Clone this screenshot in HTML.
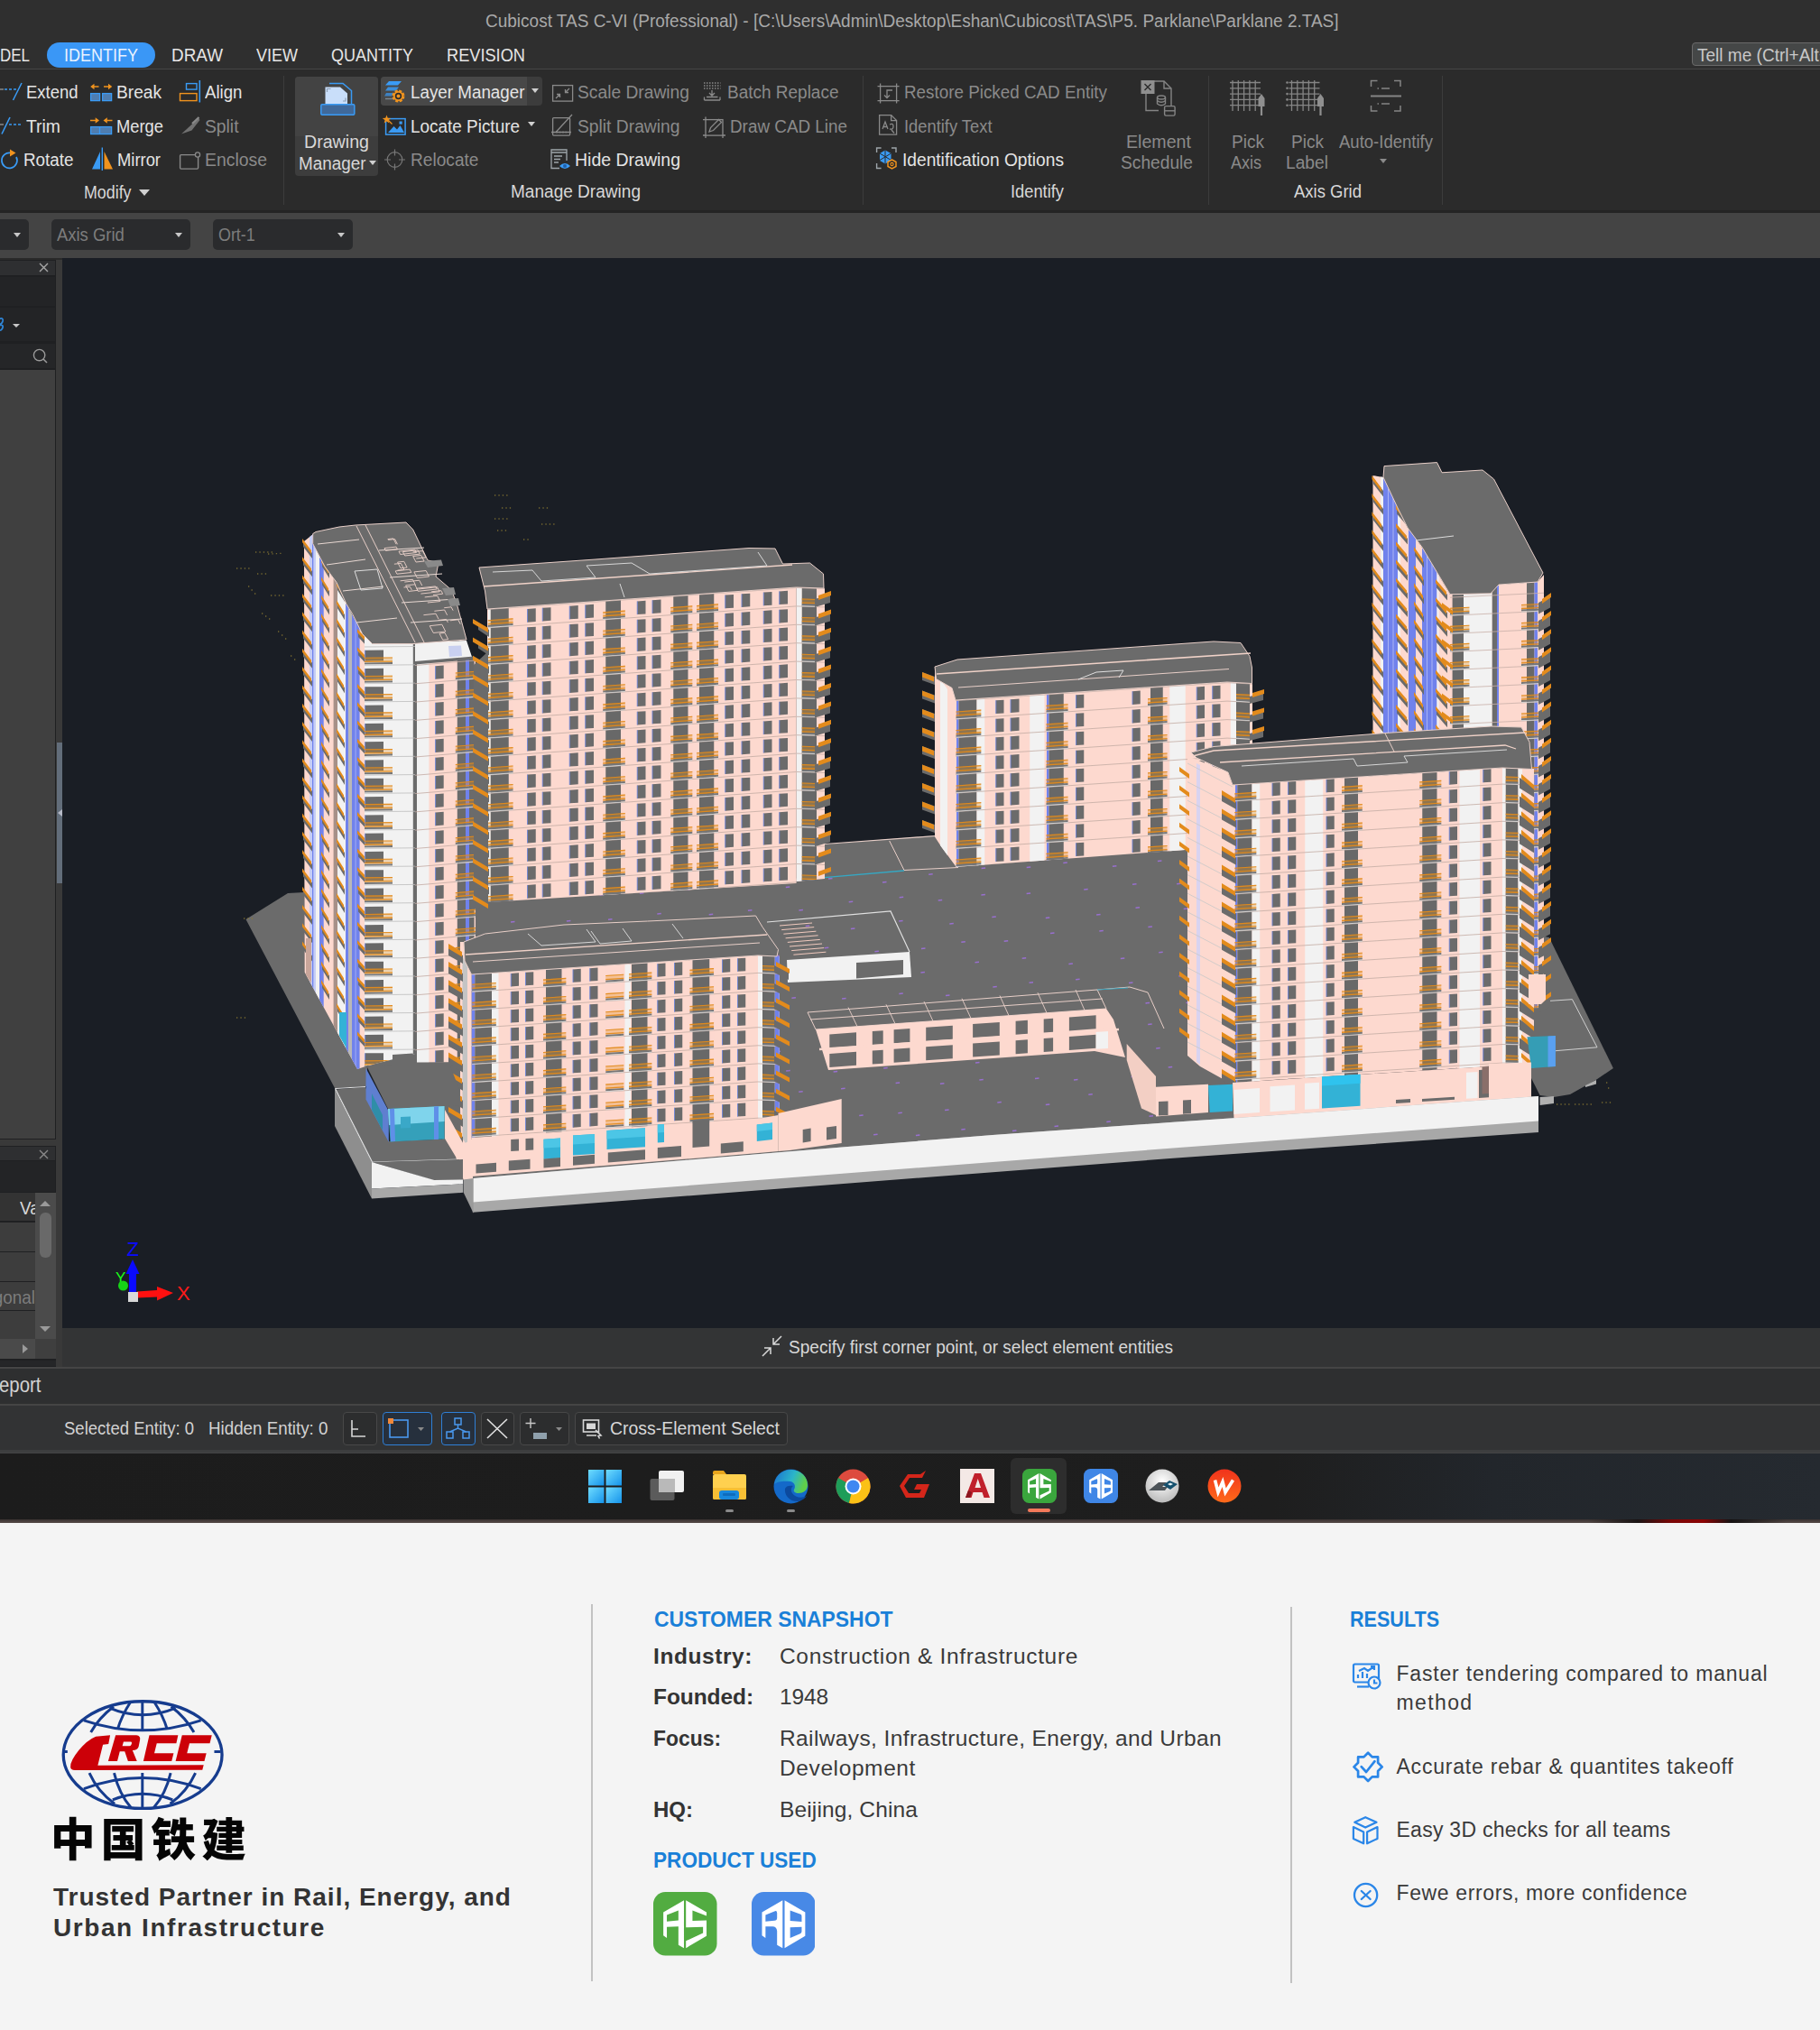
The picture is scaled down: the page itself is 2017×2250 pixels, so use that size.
<!DOCTYPE html>
<html><head><meta charset="utf-8"><title>Cubicost TAS</title>
<style>
html,body{margin:0;padding:0;background:#f4f4f4;}
body{width:2017px;height:2250px;position:relative;overflow:hidden;font-family:"Liberation Sans","Noto Sans CJK SC",sans-serif;}
div{box-sizing:content-box}
</style></head><body>
<div style="position:absolute;left:0px;top:286px;width:2017px;height:1186px;background:#1a1e25;"></div>
<div style="position:absolute;left:0px;top:286px;width:69px;height:1230px;background:#393939;"></div>
<div style="position:absolute;left:0px;top:286px;width:69px;height:2px;background:#2a2a2a;"></div>
<div style="position:absolute;left:0px;top:288px;width:62px;height:975px;background:#1f2022;"></div>
<div style="position:absolute;left:0px;top:289px;width:61px;height:15.5px;background:#2e2f31;"></div>
<svg style="position:absolute;left:43px;top:291px" width="11" height="11" viewBox="0 0 11 11"><path d="M1 1L10 10M10 1L1 10" stroke="#a8a8a8" stroke-width="1.4" fill="none"/></svg>
<div style="position:absolute;left:0px;top:306.5px;width:61px;height:32px;background:#232426;"></div>
<div style="position:absolute;left:0px;top:341px;width:61px;height:36.5px;background:#232426;"></div>
<svg style="position:absolute;left:0;top:350px" width="8" height="22" viewBox="0 0 8 22"><path d="M-2 4q6 -3 5 2q-1 4 -5 3M-2 11q6 -2 5 2q-1 4 -5 3" stroke="#2f86d8" stroke-width="1.8" fill="none"/></svg>
<div style="position:absolute;left:14px;top:358.8px;border:4px solid transparent;border-top:4.4px solid #c8c8c8;border-bottom:0"></div>
<div style="position:absolute;left:0px;top:380.5px;width:61px;height:27.5px;background:#252628;"></div>
<svg style="position:absolute;left:35px;top:385px" width="20" height="20" viewBox="0 0 20 20"><circle cx="8.6" cy="8.6" r="6.2" stroke="#9a9a9a" stroke-width="1.4" fill="none"/><path d="M13 13l4 4" stroke="#9a9a9a" stroke-width="1.6"/></svg>
<div style="position:absolute;left:0px;top:410px;width:61px;height:852px;background:#404040;"></div>
<div style="position:absolute;left:62.8px;top:823px;width:6.3px;height:156px;background:#626d7a;"></div>
<div style="position:absolute;left:64px;top:896.5px;border:4.5px solid transparent;border-right:5px solid #b5b9c6;border-left:0"></div>
<div style="position:absolute;left:0px;top:1270px;width:62px;height:246px;background:#1f2022;"></div>
<div style="position:absolute;left:0px;top:1271px;width:61px;height:15px;background:#2e2f31;"></div>
<svg style="position:absolute;left:43px;top:1273.5px" width="11" height="11" viewBox="0 0 11 11"><path d="M1 1L10 10M10 1L1 10" stroke="#8a8a8a" stroke-width="1.4" fill="none"/></svg>
<div style="position:absolute;left:0px;top:1287px;width:61px;height:34px;background:#232426;"></div>
<div style="position:absolute;left:0px;top:1322px;width:39px;height:31px;background:#333333;"></div>
<div style="position:absolute;left:21.5px;top:1327.5px;width:17.5px;height:24px;overflow:hidden"><div style="font-size:21px;line-height:21px;color:#d8d8d8;white-space:nowrap;transform:scaleX(0.9);transform-origin:0 0">Value</div></div>
<div style="position:absolute;left:0px;top:1354.5px;width:39px;height:32px;background:#3d3d3d;"></div>
<div style="position:absolute;left:0px;top:1387.5px;width:39px;height:32px;background:#3d3d3d;"></div>
<div style="position:absolute;left:0px;top:1420.5px;width:39px;height:31.5px;background:#3d3d3d;"></div>
<div style="position:absolute;left:0px;top:1453px;width:39px;height:31px;background:#3d3d3d;"></div>
<div style="position:absolute;left:0;top:1426.5px;width:38.5px;height:26px;overflow:hidden"><div style="position:absolute;right:0;top:0;font-size:21px;line-height:21px;color:#7c7c7c;white-space:nowrap;transform:scaleX(0.9);transform-origin:100% 0">Orthogonal</div></div>
<div style="position:absolute;left:39px;top:1322px;width:23px;height:162px;background:#4b4b4b;"></div>
<div style="position:absolute;left:44px;top:1344px;width:12.5px;height:50px;background:#696969;border-radius:6px;"></div>
<div style="position:absolute;left:44.1px;top:1330.59px;border:6.2px solid transparent;border-bottom:6.82px solid #9a9a9a;border-top:0"></div>
<div style="position:absolute;left:44.1px;top:1470.09px;border:6.2px solid transparent;border-top:6.82px solid #9a9a9a;border-bottom:0"></div>
<div style="position:absolute;left:0px;top:1484px;width:39px;height:22px;background:#4a4a4a;"></div>
<div style="position:absolute;left:39px;top:1484px;width:23px;height:22px;background:#3f3f3f;"></div>
<div style="position:absolute;left:25.475px;top:1489.5px;border:5.5px solid transparent;border-left:6.05px solid #9a9a9a;border-right:0"></div>
<div style="position:absolute;left:0px;top:1508px;width:62px;height:6px;background:#252628;"></div>
<svg style="position:absolute;left:0;top:0" width="2017" height="1480" viewBox="0 0 2017 1480" shape-rendering="auto">
<polygon points="272.5,1019 319,990 337.5,989 337.5,1077.5 407,1183 407,1204 371,1206" fill="#6b6b6b" />
<polygon points="1697,1035 1716.8,1039 1787.9,1184 1769,1196.7 1740,1213 1722,1216 1706.6,1214 1697,1195" fill="#6b6b6b" />
<polygon points="1706.6,1216 1722,1215 1722,1223 1706.6,1225" fill="#b0b0b0" />
<polygon points="1757,1203 1769,1197 1769,1201.5 1757,1205" fill="#b0b0b0" />
<polyline points="1713.6,1109.6 1742.4,1107.7 1770,1160.8 1723.9,1164.7" fill="none" stroke="#d0d0d0" stroke-width="1" />
<clipPath id="podclip"><polygon points="400,1000 912,972 912,936 1036,926 1320,940 1400,1237 523.8,1306 490,1262 406,1181"/></clipPath>
<polygon points="400,1000 912,972 912,936 1036,926 1320,940 1400,1237 523.8,1306 490,1262 406,1181" fill="#6b6b6b" />
<path d="M557.2 996.5l4.500 -0.500M614.4 992.4l4.500 -0.500M664.6 992.1l4.500 -0.500M708.9 990.2l4.500 -0.500M760.6 986.1l4.500 -0.500M813.1 979.4l4.500 -0.500M870.8 983.5l4.500 -0.500M918 974.1l4.500 -0.500M978 978.1l4.500 -0.500M1029.2 969.3l4.500 -0.500M1087.6 962.5l4.500 -0.500M1137.7 961.6l4.500 -0.500M1178.3 956.6l4.500 -0.500M1232.9 960.3l4.500 -0.500M1282.9 954.6l4.500 -0.500M1342.2 949.2l4.500 -0.500M1392.8 942.8l4.500 -0.500M566 1022.1l4.500 -0.500M627.9 1021l4.500 -0.500M674 1019.3l4.500 -0.500M728.3 1013.1l4.500 -0.500M785.7 1013.8l4.500 -0.500M828.9 1009.2l4.500 -0.500M885.4 1009l4.500 -0.500M940.7 999.8l4.500 -0.500M996.7 994.8l4.500 -0.500M1039.7 997.9l4.500 -0.500M1087.4 991.9l4.500 -0.500M1137.6 990.4l4.500 -0.500M1201.2 986.1l4.500 -0.500M1255 980.2l4.500 -0.500M1304.1 979.7l4.500 -0.500M1354.3 975.1l4.500 -0.500M1410.4 976.6l4.500 -0.500M585.6 1051.6l4.500 -0.500M631 1048.7l4.500 -0.500M692.4 1048.3l4.500 -0.500M747.2 1037.9l4.500 -0.500M792.2 1038.5l4.500 -0.500M838.4 1033.1l4.500 -0.500M892.7 1026.4l4.500 -0.500M942.9 1029.6l4.500 -0.500M996.1 1021.1l4.500 -0.500M1052.3 1024l4.500 -0.500M1099.3 1016.5l4.500 -0.500M1158.8 1017.5l4.500 -0.500M1215.1 1014l4.500 -0.500M1258.5 1006.3l4.500 -0.500M1311.7 1007.6l4.500 -0.500M1373.3 997l4.500 -0.500M1412.8 994.5l4.500 -0.500M594.7 1074.8l4.500 -0.500M652.4 1069.3l4.500 -0.500M695.1 1067.6l4.500 -0.500M752.9 1065.8l4.500 -0.500M814.2 1063.7l4.500 -0.500M859.2 1059.7l4.500 -0.500M913.8 1050.7l4.500 -0.500M969.4 1054.7l4.500 -0.500M1021 1051.6l4.500 -0.500M1065.3 1044.3l4.500 -0.500M1112.7 1043.3l4.500 -0.500M1164 1034.4l4.500 -0.500M1218.3 1032l4.500 -0.500M1272.4 1027.6l4.500 -0.500M1319 1025.3l4.500 -0.500M1372.6 1024.1l4.500 -0.500M1423.4 1025.9l4.500 -0.500M613.8 1096.5l4.500 -0.500M660 1095.2l4.500 -0.500M713.8 1089.6l4.500 -0.500M773.6 1095l4.500 -0.500M819.5 1086.6l4.500 -0.500M865.4 1079.5l4.500 -0.500M921.5 1077.8l4.500 -0.500M981.3 1073.5l4.500 -0.500M1020.4 1078.1l4.500 -0.500M1080.5 1066.8l4.500 -0.500M1132.7 1062.3l4.500 -0.500M1184.4 1068.5l4.500 -0.500M1241.8 1062.4l4.500 -0.500M1284.2 1055.8l4.500 -0.500M1334.7 1056.5l4.500 -0.500M1392.5 1053.3l4.500 -0.500M1441.3 1044.4l4.500 -0.500M630 1129.8l4.500 -0.500M682.6 1124.8l4.500 -0.500M734.1 1120.8l4.500 -0.500M776.6 1115.3l4.500 -0.500M830.7 1107.1l4.500 -0.500M877.4 1106.3l4.500 -0.500M933.1 1107.1l4.500 -0.500M996.3 1101.4l4.500 -0.500M1048 1103.5l4.500 -0.500M1100.3 1093.9l4.500 -0.500M1140.5 1089.3l4.500 -0.500M1192.1 1085.7l4.500 -0.500M1251 1089.4l4.500 -0.500M1306.4 1081.9l4.500 -0.500M1355.4 1081.8l4.500 -0.500M1398.4 1077.1l4.500 -0.500M1463.6 1075l4.500 -0.500M642 1149.8l4.500 -0.500M684.9 1149.6l4.500 -0.500M739.3 1146.4l4.500 -0.500M801.5 1139.1l4.500 -0.500M844.4 1141.3l4.500 -0.500M901.6 1130.2l4.500 -0.500M944 1126.7l4.500 -0.500M1008.5 1130l4.500 -0.500M1048.3 1126.9l4.500 -0.500M1113.7 1121.9l4.500 -0.500M1155.6 1117.5l4.500 -0.500M1204.1 1108.8l4.500 -0.500M1269.5 1111.9l4.500 -0.500M1314.4 1111.4l4.500 -0.500M1364.9 1107.5l4.500 -0.500M1423.2 1097.6l4.500 -0.500M1466 1095.1l4.500 -0.500M646.8 1175.9l4.500 -0.500M699.1 1170.9l4.500 -0.500M749.1 1172.5l4.500 -0.500M804.7 1164.7l4.500 -0.500M860.3 1165.8l4.500 -0.500M909.7 1162.7l4.500 -0.500M963 1155.5l4.500 -0.500M1015.4 1147.1l4.500 -0.500M1066 1145.4l4.500 -0.500M1111.1 1148.3l4.500 -0.500M1165.8 1141.7l4.500 -0.500M1226.6 1139.3l4.500 -0.500M1272.2 1135.6l4.500 -0.500M1327.9 1134.9l4.500 -0.500M1372.7 1129.4l4.500 -0.500M1427 1123.3l4.500 -0.500M1487.4 1122.3l4.500 -0.500M665 1202.6l4.500 -0.500M722.6 1196.1l4.500 -0.500M769.8 1193.5l4.500 -0.500M820.2 1192l4.500 -0.500M871.2 1187.1l4.500 -0.500M923.6 1187.9l4.500 -0.500M979.2 1184l4.500 -0.500M1035.1 1174.5l4.500 -0.500M1081 1178l4.500 -0.500M1137.4 1166.7l4.500 -0.500M1177.9 1166.4l4.500 -0.500M1229.2 1161.1l4.500 -0.500M1281.2 1162.1l4.500 -0.500M1344.5 1161.1l4.500 -0.500M1386.5 1156l4.500 -0.500M1446.6 1146.9l4.500 -0.500M1502.1 1151.9l4.500 -0.500M672.5 1229.5l4.500 -0.500M727.4 1221.6l4.500 -0.500M788.8 1221.7l4.500 -0.500M827.6 1214.4l4.500 -0.500M885.2 1210.2l4.500 -0.500M932.1 1206.7l4.500 -0.500M992.6 1200.4l4.500 -0.500M1041.9 1201.3l4.500 -0.500M1085.3 1196.9l4.500 -0.500M1147 1195.4l4.500 -0.500M1190 1196.9l4.500 -0.500M1253.6 1193.4l4.500 -0.500M1294.7 1183.1l4.500 -0.500M1345.6 1184.9l4.500 -0.500M1401.3 1175.1l4.500 -0.500M1455.8 1179.6l4.500 -0.500M1514.1 1169.8l4.500 -0.500M684.4 1254.2l4.500 -0.500M743.1 1248.7l4.500 -0.500M787.4 1239l4.500 -0.500M849 1239.4l4.500 -0.500M891.2 1241.2l4.500 -0.500M952.2 1236.5l4.500 -0.500M995.3 1233.8l4.500 -0.500M1047.1 1230.5l4.500 -0.500M1105.3 1222l4.500 -0.500M1158.8 1224.6l4.500 -0.500M1206.3 1213.3l4.500 -0.500M1262.4 1211.1l4.500 -0.500M1307.8 1207l4.500 -0.500M1358.8 1204.1l4.500 -0.500M1415 1201.9l4.500 -0.500M1474.2 1198.4l4.500 -0.500M1522 1194l4.500 -0.500M700.6 1270.2l4.500 -0.500M751 1266.9l4.500 -0.500M810.7 1268.9l4.500 -0.500M854 1264.8l4.500 -0.500M918 1257.9l4.500 -0.500M968.1 1257.8l4.500 -0.500M1014.9 1258.5l4.500 -0.500M1065.3 1252l4.500 -0.500M1122 1253.4l4.500 -0.500M1168.5 1248.6l4.500 -0.500M1226.3 1243.4l4.500 -0.500M1273.5 1237.2l4.500 -0.500M1319.9 1231.7l4.500 -0.500M1372.1 1234.5l4.500 -0.500M1427.1 1225.4l4.500 -0.500M1476.4 1228.9l4.500 -0.500M1540.9 1223.9l4.500 -0.500M712.5 1297.4l4.500 -0.500M764.7 1296.3l4.500 -0.500M814.5 1292.9l4.500 -0.500M868.2 1294.7l4.500 -0.500M931.6 1287.3l4.500 -0.500M971.9 1288.2l4.500 -0.500M1025 1278.8l4.500 -0.500M1072 1275.7l4.500 -0.500M1131.6 1273.6l4.500 -0.500M1179.2 1270.3l4.500 -0.500M1228.1 1264.6l4.500 -0.500M1281.4 1262.7l4.500 -0.500M1332.7 1255.6l4.500 -0.500M1388.9 1254.4l4.500 -0.500M1445.4 1254.1l4.500 -0.500M1500 1252.1l4.500 -0.500M1551.5 1251l4.500 -0.500" stroke="#a070e0" stroke-width="1.500" fill="none" opacity="0.850" clip-path="url(#podclip)"/>
<polyline points="905,973.4 1002,965" fill="none" stroke="#35a8c4" stroke-width="1.3" />
<polyline points="985.7,932 1002,964.5 1062,961.5" fill="none" stroke="#e8cfc8" stroke-width="1" />
<polyline points="914,935.5 1037,926.5" fill="none" stroke="#e8cfc8" stroke-width="1.2" />
<clipPath id="c1"><polygon points="1521.5,527 1533,529 1549,563 1560,585 1576,606.5 1607,658.7 1607,830 1521.5,830"/></clipPath>
<g clip-path="url(#c1)">
<rect x="1520" y="520" width="90" height="320" fill="#fdd9cf"/>
<rect x="1530" y="520" width="3" height="320" fill="#f2f2f2"/>
<rect x="1533" y="520" width="16" height="320" fill="#7082ec"/>
<rect x="1549" y="520" width="3" height="320" fill="#f2f2f2"/>
<rect x="1561" y="520" width="8" height="320" fill="#7082ec"/>
<rect x="1576" y="520" width="16.5" height="320" fill="#7082ec"/>
<rect x="1592.5" y="520" width="2" height="320" fill="#f2f2f2"/>
<rect x="1538" y="520" width="1" height="320" fill="#a9b3f4"/>
<rect x="1543.5" y="520" width="1" height="320" fill="#a9b3f4"/>
<rect x="1581" y="520" width="1" height="320" fill="#a9b3f4"/>
<rect x="1586.5" y="520" width="1" height="320" fill="#a9b3f4"/>
</g>
<path d="M1522 530L1533 544V550.5L1522 536.5zM1522 550.1L1533 564.1V570.6L1522 556.6zM1522 570.2L1533 584.2V590.7L1522 576.7zM1522 590.3L1533 604.3V610.8L1522 596.8zM1522 610.4L1533 624.4V630.9L1522 616.9zM1522 630.5L1533 644.5V651L1522 637zM1522 650.6L1533 664.6V671.1L1522 657.1zM1522 670.7L1533 684.7V691.2L1522 677.2zM1522 690.8L1533 704.8V711.3L1522 697.3zM1522 710.9L1533 724.9V731.4L1522 717.4zM1522 731L1533 745V751.5L1522 737.5zM1522 751.1L1533 765.1V771.6L1522 757.6zM1522 771.2L1533 785.2V791.7L1522 777.7zM1522 791.3L1533 805.3V811.8L1522 797.8zM1522 811.4L1533 825.4V831.9L1522 817.9zM1548 563L1560 577V583.5L1548 569.5zM1548 583.1L1560 597.1V603.6L1548 589.6zM1548 603.2L1560 617.2V623.7L1548 609.7zM1548 623.3L1560 637.3V643.8L1548 629.8zM1548 643.4L1560 657.4V663.9L1548 649.9zM1548 663.5L1560 677.5V684L1548 670zM1548 683.6L1560 697.6V704.1L1548 690.1zM1548 703.7L1560 717.7V724.2L1548 710.2zM1548 723.8L1560 737.8V744.3L1548 730.3zM1548 743.9L1560 757.9V764.4L1548 750.4zM1548 764L1560 778V784.5L1548 770.5zM1548 784.1L1560 798.1V804.6L1548 790.6zM1548 804.2L1560 818.2V824.7L1548 810.7zM1568 589L1578 603V609.5L1568 595.5zM1568 609.1L1578 623.1V629.6L1568 615.6zM1568 629.2L1578 643.2V649.7L1568 635.7zM1568 649.3L1578 663.3V669.8L1568 655.8zM1568 669.4L1578 683.4V689.9L1568 675.9zM1568 689.5L1578 703.5V710L1568 696zM1568 709.6L1578 723.6V730.1L1568 716.1zM1568 729.7L1578 743.7V750.2L1568 736.2zM1568 749.8L1578 763.8V770.3L1568 756.3zM1568 769.9L1578 783.9V790.4L1568 776.4zM1568 790L1578 804V810.5L1568 796.5zM1568 810.1L1578 824.1V830.6L1568 816.6zM1592 625L1604 639V645.5L1592 631.5zM1592 645.1L1604 659.1V665.6L1592 651.6zM1592 665.2L1604 679.2V685.7L1592 671.7zM1592 685.3L1604 699.3V705.8L1592 691.8zM1592 705.4L1604 719.4V725.9L1592 711.9zM1592 725.5L1604 739.5V746L1592 732zM1592 745.6L1604 759.6V766.1L1592 752.1zM1592 765.7L1604 779.7V786.2L1592 772.2zM1592 785.8L1604 799.8V806.3L1592 792.3zM1592 805.9L1604 819.9V826.4L1592 812.4z" fill="#6b6b6b"/>
<path d="M1520.5 527L1531 541V545.2L1520.5 531.2zM1520.5 547.1L1531 561.1V565.3L1520.5 551.3zM1520.5 567.2L1531 581.2V585.4L1520.5 571.4zM1520.5 587.3L1531 601.3V605.5L1520.5 591.5zM1520.5 607.4L1531 621.4V625.6L1520.5 611.6zM1520.5 627.5L1531 641.5V645.7L1520.5 631.7zM1520.5 647.6L1531 661.6V665.8L1520.5 651.8zM1520.5 667.7L1531 681.7V685.9L1520.5 671.9zM1520.5 687.8L1531 701.8V706L1520.5 692zM1520.5 707.9L1531 721.9V726.1L1520.5 712.1zM1520.5 728L1531 742V746.2L1520.5 732.2zM1520.5 748.1L1531 762.1V766.3L1520.5 752.3zM1520.5 768.2L1531 782.2V786.4L1520.5 772.4zM1520.5 788.3L1531 802.3V806.5L1520.5 792.5zM1520.5 808.4L1531 822.4V826.6L1520.5 812.6zM1547 560L1559 574V578.2L1547 564.2zM1547 580.1L1559 594.1V598.3L1547 584.3zM1547 600.2L1559 614.2V618.4L1547 604.4zM1547 620.3L1559 634.3V638.5L1547 624.5zM1547 640.4L1559 654.4V658.6L1547 644.6zM1547 660.5L1559 674.5V678.7L1547 664.7zM1547 680.6L1559 694.6V698.8L1547 684.8zM1547 700.7L1559 714.7V718.9L1547 704.9zM1547 720.8L1559 734.8V739L1547 725zM1547 740.9L1559 754.9V759.1L1547 745.1zM1547 761L1559 775V779.2L1547 765.2zM1547 781.1L1559 795.1V799.3L1547 785.3zM1547 801.2L1559 815.2V819.4L1547 805.4zM1567 586L1577 600V604.2L1567 590.2zM1567 606.1L1577 620.1V624.3L1567 610.3zM1567 626.2L1577 640.2V644.4L1567 630.4zM1567 646.3L1577 660.3V664.5L1567 650.5zM1567 666.4L1577 680.4V684.6L1567 670.6zM1567 686.5L1577 700.5V704.7L1567 690.7zM1567 706.6L1577 720.6V724.8L1567 710.8zM1567 726.7L1577 740.7V744.9L1567 730.9zM1567 746.8L1577 760.8V765L1567 751zM1567 766.9L1577 780.9V785.1L1567 771.1zM1567 787L1577 801V805.2L1567 791.2zM1567 807.1L1577 821.1V825.3L1567 811.3zM1591 622L1603 636V640.2L1591 626.2zM1591 642.1L1603 656.1V660.3L1591 646.3zM1591 662.2L1603 676.2V680.4L1591 666.4zM1591 682.3L1603 696.3V700.5L1591 686.5zM1591 702.4L1603 716.4V720.6L1591 706.6zM1591 722.5L1603 736.5V740.7L1591 726.7zM1591 742.6L1603 756.6V760.8L1591 746.8zM1591 762.7L1603 776.7V780.9L1591 766.9zM1591 782.8L1603 796.8V801L1591 787zM1591 802.9L1603 816.9V821.1L1591 807.1z" fill="#e38b1c"/>
<clipPath id="c2"><polygon points="1607,658.7 1652,657.8 1661,648 1704,645 1711,637 1711,1118 1690,1118 1690,840 1607,840"/></clipPath>
<g clip-path="url(#c2)"><g transform="matrix(1 -0.04808 0 1 1607 659)">
<rect x="-30" y="-40" width="164" height="579" fill="#fdd9cf"/>
<rect x="2.6" y="-40" width="12.4" height="579" fill="#6b6b6b"/>
<rect x="15" y="-40" width="31.7" height="579" fill="#f2f2f2"/>
<rect x="46.7" y="-40" width="5.3" height="579" fill="#6b6b6b"/>
<rect x="52" y="-40" width="2" height="579" fill="#7082ec"/>
<rect x="85" y="-40" width="8.5" height="579" fill="#6b6b6b"/>
<rect x="93.5" y="-40" width="3.5" height="579" fill="#7082ec"/>
<path d="M-30 3.2H134 M-30 23.3H134 M-30 43.4H134 M-30 63.5H134 M-30 83.6H134 M-30 103.7H134 M-30 123.8H134 M-30 143.9H134 M-30 164H134 M-30 184.1H134 M-30 204.2H134 M-30 224.3H134 M-30 244.4H134 M-30 264.5H134 M-30 284.6H134 M-30 304.7H134 M-30 324.8H134 M-30 344.9H134 M-30 365H134 M-30 385.1H134 M-30 405.2H134 M-30 425.3H134 M-30 445.4H134 M-30 465.5H134 M-30 485.6H134 M-30 505.7H134" stroke="#c9b0a8" stroke-width="0.8" fill="none"/>
<line x1="10" y1="14.7" x2="10" y2="539" stroke="#e38b1c" stroke-width="22.8" stroke-dasharray="5.6 14.5" opacity="0.32"/>
<line x1="10" y1="14.7" x2="10" y2="539" stroke="#e38b1c" stroke-width="22.8" stroke-dasharray="1.1 19" opacity="0.95"/>
<line x1="10" y1="18.7" x2="10" y2="539" stroke="#e38b1c" stroke-width="22.8" stroke-dasharray="1.3 18.8" opacity="0.95"/>
<line x1="10" y1="20.4" x2="10" y2="539" stroke="#767676" stroke-width="22.8" stroke-dasharray="2 18.1" opacity="1"/>
<line x1="10" y1="22.5" x2="10" y2="539" stroke="#d2d2d2" stroke-width="22.8" stroke-dasharray="0.9 19.2" opacity="1"/>
<line x1="91.05" y1="14.7" x2="91.05" y2="539" stroke="#e38b1c" stroke-width="24.1" stroke-dasharray="5.6 14.5" opacity="0.32"/>
<line x1="91.05" y1="14.7" x2="91.05" y2="539" stroke="#e38b1c" stroke-width="24.1" stroke-dasharray="1.1 19" opacity="0.95"/>
<line x1="91.05" y1="18.7" x2="91.05" y2="539" stroke="#e38b1c" stroke-width="24.1" stroke-dasharray="1.3 18.8" opacity="0.95"/>
<line x1="91.05" y1="20.4" x2="91.05" y2="539" stroke="#767676" stroke-width="24.1" stroke-dasharray="2 18.1" opacity="1"/>
<line x1="91.05" y1="22.5" x2="91.05" y2="539" stroke="#d2d2d2" stroke-width="24.1" stroke-dasharray="0.9 19.2" opacity="1"/>
</g></g>
<path d="M1705 668L1718 661V673.5L1705 680.5zM1705 688.1L1718 681.1V693.6L1705 700.6zM1705 708.2L1718 701.2V713.7L1705 720.7zM1705 728.3L1718 721.3V733.8L1705 740.8zM1705 748.4L1718 741.4V753.9L1705 760.9zM1705 768.5L1718 761.5V774L1705 781zM1705 788.6L1718 781.6V794.1L1705 801.1zM1705 808.7L1718 801.7V814.2L1705 821.2zM1705 828.8L1718 821.8V834.3L1705 841.3zM1705 848.9L1718 841.9V854.4L1705 861.4zM1705 869L1718 862V874.5L1705 881.5zM1705 889.1L1718 882.1V894.6L1705 901.6zM1705 909.2L1718 902.2V914.7L1705 921.7zM1705 929.3L1718 922.3V934.8L1705 941.8zM1705 949.4L1718 942.4V954.9L1705 961.9zM1705 969.5L1718 962.5V975L1705 982zM1705 989.6L1718 982.6V995.1L1705 1002.1zM1705 1009.7L1718 1002.7V1015.2L1705 1022.2zM1705 1029.8L1718 1022.8V1035.3L1705 1042.3zM1705 1049.9L1718 1042.9V1055.4L1705 1062.4zM1705 1070L1718 1063V1075.5L1705 1082.5zM1705 1090.1L1718 1083.1V1095.6L1705 1102.6zM1705 1110.2L1718 1103.2V1115.7L1705 1122.7z" fill="#6b6b6b"/>
<path d="M1709 664L1719 657V662L1709 669zM1709 684.1L1719 677.1V682.1L1709 689.1zM1709 704.2L1719 697.2V702.2L1709 709.2zM1709 724.3L1719 717.3V722.3L1709 729.3zM1709 744.4L1719 737.4V742.4L1709 749.4zM1709 764.5L1719 757.5V762.5L1709 769.5zM1709 784.6L1719 777.6V782.6L1709 789.6zM1709 804.7L1719 797.7V802.7L1709 809.7zM1709 824.8L1719 817.8V822.8L1709 829.8zM1709 844.9L1719 837.9V842.9L1709 849.9zM1709 865L1719 858V863L1709 870zM1709 885.1L1719 878.1V883.1L1709 890.1zM1709 905.2L1719 898.2V903.2L1709 910.2zM1709 925.3L1719 918.3V923.3L1709 930.3zM1709 945.4L1719 938.4V943.4L1709 950.4zM1709 965.5L1719 958.5V963.5L1709 970.5zM1709 985.6L1719 978.6V983.6L1709 990.6zM1709 1005.7L1719 998.7V1003.7L1709 1010.7zM1709 1025.8L1719 1018.8V1023.8L1709 1030.8zM1709 1045.9L1719 1038.9V1043.9L1709 1050.9zM1709 1066L1719 1059V1064L1709 1071zM1709 1086.1L1719 1079.1V1084.1L1709 1091.1zM1709 1106.2L1719 1099.2V1104.2L1709 1111.2z" fill="#e38b1c"/>
<path d="M1598 668L1610 677V681.5L1598 672.5zM1598 688.1L1610 697.1V701.6L1598 692.6zM1598 708.2L1610 717.2V721.7L1598 712.7zM1598 728.3L1610 737.3V741.8L1598 732.8zM1598 748.4L1610 757.4V761.9L1598 752.9zM1598 768.5L1610 777.5V782L1598 773zM1598 788.6L1610 797.6V802.1L1598 793.1z" fill="#e38b1c"/>
<polygon points="1534,516.6 1592.5,512.6 1598,523.8 1643,521 1655.5,531 1710,635 1704,645 1661,648 1652,657.8 1607,658.7 1576,606.5 1560,585 1549,563 1533,529" fill="#6b6b6b" stroke="#e8cfc8" stroke-width="1"/>
<polyline points="1569,599 1611,594" fill="none" stroke="#dcdcdc" stroke-width="1" />
<polygon points="1036,740 1056,760 1059,776 1059,960 1042.5,937.5 1036,927.5" fill="#fdd9cf" />
<polygon points="1042,752 1050,764 1050,948 1042,937" fill="#f2f2f2" />
<path d="M1022 745L1036 750V759L1022 754zM1022 765.5L1036 770.5V779.5L1022 774.5zM1022 786L1036 791V800L1022 795zM1022 806.5L1036 811.5V820.5L1022 815.5zM1022 827L1036 832V841L1022 836zM1022 847.5L1036 852.5V861.5L1022 856.5zM1022 868L1036 873V882L1022 877zM1022 888.5L1036 893.5V902.5L1022 897.5zM1022 909L1036 914V923L1022 918z" fill="#6b6b6b"/>
<path d="M1022 745L1035 750V755.5L1022 750.5zM1022 765.5L1035 770.5V776L1022 771zM1022 786L1035 791V796.5L1022 791.5zM1022 806.5L1035 811.5V817L1022 812zM1022 827L1035 832V837.5L1022 832.5zM1022 847.5L1035 852.5V858L1022 853zM1022 868L1035 873V878.5L1022 873.5zM1022 888.5L1035 893.5V899L1022 894zM1022 909L1035 914V919.5L1022 914.5z" fill="#e38b1c"/>
<clipPath id="c3"><polygon points="1059,776 1360,756 1360,938.5 1059,961"/></clipPath>
<g clip-path="url(#c3)"><g transform="matrix(1 -0.06645 0 1 1059 776)">
<rect x="-30" y="-40" width="361" height="305" fill="#fdd9cf"/>
<rect x="1" y="-40" width="2.5" height="305" fill="#7082ec"/>
<rect x="3.5" y="-40" width="20" height="305" fill="#6b6b6b"/>
<rect x="23.5" y="-40" width="8.75" height="305" fill="#f2f2f2"/>
<line x1="49.125" y1="3.183" x2="49.125" y2="265" stroke="#6b6b6b" stroke-width="8.75" stroke-dasharray="14.76 5.74"/>
<line x1="44.75" y1="3.183" x2="44.75" y2="265" stroke="#6f86d8" stroke-width="0.9" stroke-dasharray="14.76 5.74"/>
<line x1="65.75" y1="3.183" x2="65.75" y2="265" stroke="#6b6b6b" stroke-width="9.5" stroke-dasharray="14.76 5.74"/>
<line x1="61" y1="3.183" x2="61" y2="265" stroke="#6f86d8" stroke-width="0.9" stroke-dasharray="14.76 5.74"/>
<rect x="82.25" y="-40" width="16.25" height="305" fill="#f2f2f2"/>
<rect x="101" y="-40" width="2.5" height="305" fill="#7082ec"/>
<rect x="103.5" y="-40" width="16.25" height="305" fill="#6b6b6b"/>
<line x1="137.875" y1="3.183" x2="137.875" y2="265" stroke="#6b6b6b" stroke-width="8.75" stroke-dasharray="14.76 5.74"/>
<line x1="133.5" y1="3.183" x2="133.5" y2="265" stroke="#6f86d8" stroke-width="0.9" stroke-dasharray="14.76 5.74"/>
<line x1="200.375" y1="3.183" x2="200.375" y2="265" stroke="#6b6b6b" stroke-width="8.75" stroke-dasharray="14.76 5.74"/>
<line x1="196" y1="3.183" x2="196" y2="265" stroke="#6f86d8" stroke-width="0.9" stroke-dasharray="14.76 5.74"/>
<rect x="216" y="-40" width="13.75" height="305" fill="#6b6b6b"/>
<rect x="237.25" y="-40" width="17.5" height="305" fill="#f2f2f2"/>
<line x1="271.625" y1="3.183" x2="271.625" y2="265" stroke="#6b6b6b" stroke-width="8.75" stroke-dasharray="14.76 5.74"/>
<line x1="267.25" y1="3.183" x2="267.25" y2="265" stroke="#6f86d8" stroke-width="0.9" stroke-dasharray="14.76 5.74"/>
<line x1="289.125" y1="3.183" x2="289.125" y2="265" stroke="#6b6b6b" stroke-width="8.75" stroke-dasharray="14.76 5.74"/>
<line x1="284.75" y1="3.183" x2="284.75" y2="265" stroke="#6f86d8" stroke-width="0.9" stroke-dasharray="14.76 5.74"/>
<path d="M-30 0.6H331 M-30 21.1H331 M-30 41.6H331 M-30 62.1H331 M-30 82.6H331 M-30 103.1H331 M-30 123.6H331 M-30 144.1H331 M-30 164.6H331 M-30 185.1H331 M-30 205.6H331 M-30 226.1H331" stroke="#c4aca4" stroke-width="0.8" fill="none"/>
<line x1="14.4" y1="12.5" x2="14.4" y2="265" stroke="#e38b1c" stroke-width="27.8" stroke-dasharray="5.6 14.9" opacity="0.32"/>
<line x1="14.4" y1="12.5" x2="14.4" y2="265" stroke="#e38b1c" stroke-width="27.8" stroke-dasharray="1.1 19.4" opacity="0.95"/>
<line x1="14.4" y1="16.5" x2="14.4" y2="265" stroke="#e38b1c" stroke-width="27.8" stroke-dasharray="1.3 19.2" opacity="0.95"/>
<line x1="14.4" y1="18.2" x2="14.4" y2="265" stroke="#767676" stroke-width="27.8" stroke-dasharray="2 18.5" opacity="1"/>
<line x1="14.4" y1="20.3" x2="14.4" y2="265" stroke="#d2d2d2" stroke-width="27.8" stroke-dasharray="0.9 19.6" opacity="1"/>
<line x1="112.525" y1="12.5" x2="112.525" y2="265" stroke="#e38b1c" stroke-width="24.05" stroke-dasharray="5.6 14.9" opacity="0.32"/>
<line x1="112.525" y1="12.5" x2="112.525" y2="265" stroke="#e38b1c" stroke-width="24.05" stroke-dasharray="1.1 19.4" opacity="0.95"/>
<line x1="112.525" y1="16.5" x2="112.525" y2="265" stroke="#e38b1c" stroke-width="24.05" stroke-dasharray="1.3 19.2" opacity="0.95"/>
<line x1="112.525" y1="18.2" x2="112.525" y2="265" stroke="#767676" stroke-width="24.05" stroke-dasharray="2 18.5" opacity="1"/>
<line x1="112.525" y1="20.3" x2="112.525" y2="265" stroke="#d2d2d2" stroke-width="24.05" stroke-dasharray="0.9 19.6" opacity="1"/>
<line x1="223.775" y1="12.5" x2="223.775" y2="265" stroke="#e38b1c" stroke-width="21.55" stroke-dasharray="5.6 14.9" opacity="0.32"/>
<line x1="223.775" y1="12.5" x2="223.775" y2="265" stroke="#e38b1c" stroke-width="21.55" stroke-dasharray="1.1 19.4" opacity="0.95"/>
<line x1="223.775" y1="16.5" x2="223.775" y2="265" stroke="#e38b1c" stroke-width="21.55" stroke-dasharray="1.3 19.2" opacity="0.95"/>
<line x1="223.775" y1="18.2" x2="223.775" y2="265" stroke="#767676" stroke-width="21.55" stroke-dasharray="2 18.5" opacity="1"/>
<line x1="223.775" y1="20.3" x2="223.775" y2="265" stroke="#d2d2d2" stroke-width="21.55" stroke-dasharray="0.9 19.6" opacity="1"/>
</g></g>
<clipPath id="c4"><polygon points="1360,756 1388,757.5 1388,846.5 1360,845"/></clipPath>
<g clip-path="url(#c4)"><g transform="matrix(1 0.05357 0 1 1360 756)">
<rect x="-30" y="-40" width="88" height="209" fill="#fdd9cf"/>
<rect x="3.75" y="-40" width="6.25" height="209" fill="#f2f2f2"/>
<rect x="10" y="-40" width="15" height="209" fill="#6b6b6b"/>
<path d="M-30 0.6H58 M-30 21.1H58 M-30 41.6H58 M-30 62.1H58 M-30 82.6H58 M-30 103.1H58 M-30 123.6H58 M-30 144.1H58" stroke="#c4aca4" stroke-width="0.8" fill="none"/>
<line x1="17.5" y1="12.5" x2="17.5" y2="169" stroke="#e38b1c" stroke-width="15" stroke-dasharray="5.6 14.9" opacity="0.32"/>
<line x1="17.5" y1="12.5" x2="17.5" y2="169" stroke="#e38b1c" stroke-width="15" stroke-dasharray="1.1 19.4" opacity="0.95"/>
<line x1="17.5" y1="16.5" x2="17.5" y2="169" stroke="#e38b1c" stroke-width="15" stroke-dasharray="1.3 19.2" opacity="0.95"/>
<line x1="17.5" y1="18.2" x2="17.5" y2="169" stroke="#767676" stroke-width="15" stroke-dasharray="2 18.5" opacity="1"/>
<line x1="17.5" y1="20.3" x2="17.5" y2="169" stroke="#d2d2d2" stroke-width="15" stroke-dasharray="0.9 19.6" opacity="1"/>
</g></g>
<path d="M1385 772L1400 768V776L1385 780zM1385 792.5L1400 788.5V796.5L1385 800.5zM1385 813L1400 809V817L1385 821zM1385 833.5L1400 829.5V837.5L1385 841.5z" fill="#6b6b6b"/>
<path d="M1388 768L1401 764V769L1388 773zM1388 788.5L1401 784.5V789.5L1388 793.5zM1388 809L1401 805V810L1388 814zM1388 829.5L1401 825.5V830.5L1388 834.5z" fill="#e38b1c"/>
<polygon points="1036,739 1061,731 1345,711 1375,712.5 1385,727.5 1387.5,740 1387.5,757.5 1360,756 1059,776 1055,762.5 1037.5,752.5" fill="#6b6b6b" stroke="#e8cfc8" stroke-width="1"/>
<polyline points="1038,747 1386,724" fill="none" stroke="#f0d2c8" stroke-width="1.6" />
<polyline points="1062,762 1362,741.5" fill="none" stroke="#e8cfc8" stroke-width="1" />
<polyline points="1195,753 1215,745 1245,743 1240,751" fill="none" stroke="#e0e0e0" stroke-width="1" />
<clipPath id="c5"><polygon points="337,600 347,592 360,628 373,645 384,670 402,703 413,714 413,1180 405,1182 396,1185 337.5,1077.5"/></clipPath>
<g clip-path="url(#c5)">
<rect x="336" y="585" width="80" height="610" fill="#fdd9cf"/>
<rect x="343" y="585" width="7" height="610" fill="#c5cdf6"/>
<rect x="350" y="585" width="4" height="610" fill="#f2f2f2"/>
<rect x="354" y="585" width="4.7" height="610" fill="#7082ec"/>
<rect x="369.6" y="585" width="4.4" height="610" fill="#a79088"/>
<rect x="374" y="585" width="9" height="610" fill="#f2f2f2"/>
<rect x="383" y="585" width="3" height="610" fill="#7082ec"/>
<rect x="386" y="585" width="4" height="610" fill="#b8b8b8"/>
<rect x="390" y="585" width="8.6" height="610" fill="#7082ec"/>
<rect x="346" y="585" width="1.3" height="610" fill="#7082ec"/>
<rect x="393.5" y="585" width="1.2" height="610" fill="#9aa6f2"/>
</g>
<path d="M336 600L346 613V619L336 606zM336 620.3L346 633.3V639.3L336 626.3zM336 640.6L346 653.6V659.6L336 646.6zM336 660.9L346 673.9V679.9L336 666.9zM336 681.2L346 694.2V700.2L336 687.2zM336 701.5L346 714.5V720.5L336 707.5zM336 721.8L346 734.8V740.8L336 727.8zM336 742.1L346 755.1V761.1L336 748.1zM336 762.4L346 775.4V781.4L336 768.4zM336 782.7L346 795.7V801.7L336 788.7zM336 803L346 816V822L336 809zM336 823.3L346 836.3V842.3L336 829.3zM336 843.6L346 856.6V862.6L336 849.6zM336 863.9L346 876.9V882.9L336 869.9zM336 884.2L346 897.2V903.2L336 890.2zM336 904.5L346 917.5V923.5L336 910.5zM336 924.8L346 937.8V943.8L336 930.8zM336 945.1L346 958.1V964.1L336 951.1zM336 965.4L346 978.4V984.4L336 971.4zM336 985.7L346 998.7V1004.7L336 991.7zM336 1006L346 1019V1025L336 1012zM336 1026.3L346 1039.3V1045.3L336 1032.3zM336 1046.6L346 1059.6V1065.6L336 1052.6zM357 622L365 635V641L357 628zM357 642.3L365 655.3V661.3L357 648.3zM357 662.6L365 675.6V681.6L357 668.6zM357 682.9L365 695.9V701.9L357 688.9zM357 703.2L365 716.2V722.2L357 709.2zM357 723.5L365 736.5V742.5L357 729.5zM357 743.8L365 756.8V762.8L357 749.8zM357 764.1L365 777.1V783.1L357 770.1zM357 784.4L365 797.4V803.4L357 790.4zM357 804.7L365 817.7V823.7L357 810.7zM357 825L365 838V844L357 831zM357 845.3L365 858.3V864.3L357 851.3zM357 865.6L365 878.6V884.6L357 871.6zM357 885.9L365 898.9V904.9L357 891.9zM357 906.2L365 919.2V925.2L357 912.2zM357 926.5L365 939.5V945.5L357 932.5zM357 946.8L365 959.8V965.8L357 952.8zM357 967.1L365 980.1V986.1L357 973.1zM357 987.4L365 1000.4V1006.4L357 993.4zM357 1007.7L365 1020.7V1026.7L357 1013.7zM357 1028L365 1041V1047L357 1034zM357 1048.3L365 1061.3V1067.3L357 1054.3zM357 1068.6L365 1081.6V1087.6L357 1074.6zM357 1088.9L365 1101.9V1107.9L357 1094.9zM374 648L382 661V667L374 654zM374 668.3L382 681.3V687.3L374 674.3zM374 688.6L382 701.6V707.6L374 694.6zM374 708.9L382 721.9V727.9L374 714.9zM374 729.2L382 742.2V748.2L374 735.2zM374 749.5L382 762.5V768.5L374 755.5zM374 769.8L382 782.8V788.8L374 775.8zM374 790.1L382 803.1V809.1L374 796.1zM374 810.4L382 823.4V829.4L374 816.4zM374 830.7L382 843.7V849.7L374 836.7zM374 851L382 864V870L374 857zM374 871.3L382 884.3V890.3L374 877.3zM374 891.6L382 904.6V910.6L374 897.6zM374 911.9L382 924.9V930.9L374 917.9zM374 932.2L382 945.2V951.2L374 938.2zM374 952.5L382 965.5V971.5L374 958.5zM374 972.8L382 985.8V991.8L374 978.8zM374 993.1L382 1006.1V1012.1L374 999.1zM374 1013.4L382 1026.4V1032.4L374 1019.4zM374 1033.7L382 1046.7V1052.7L374 1039.7zM374 1054L382 1067V1073L374 1060zM374 1074.3L382 1087.3V1093.3L374 1080.3zM374 1094.6L382 1107.6V1113.6L374 1100.6zM374 1114.9L382 1127.9V1133.9L374 1120.9zM397 700L409 713V719L397 706zM397 720.3L409 733.3V739.3L397 726.3zM397 740.6L409 753.6V759.6L397 746.6zM397 760.9L409 773.9V779.9L397 766.9zM397 781.2L409 794.2V800.2L397 787.2zM397 801.5L409 814.5V820.5L397 807.5zM397 821.8L409 834.8V840.8L397 827.8zM397 842.1L409 855.1V861.1L397 848.1zM397 862.4L409 875.4V881.4L397 868.4zM397 882.7L409 895.7V901.7L397 888.7zM397 903L409 916V922L397 909zM397 923.3L409 936.3V942.3L397 929.3zM397 943.6L409 956.6V962.6L397 949.6zM397 963.9L409 976.9V982.9L397 969.9zM397 984.2L409 997.2V1003.2L397 990.2zM397 1004.5L409 1017.5V1023.5L397 1010.5zM397 1024.8L409 1037.8V1043.8L397 1030.8zM397 1045.1L409 1058.1V1064.1L397 1051.1zM397 1065.4L409 1078.4V1084.4L397 1071.4zM397 1085.7L409 1098.7V1104.7L397 1091.7zM397 1106L409 1119V1125L397 1112zM397 1126.3L409 1139.3V1145.3L397 1132.3zM397 1146.6L409 1159.6V1165.6L397 1152.6z" fill="#6b6b6b"/>
<path d="M335 597L345 610V614L335 601zM335 617.3L345 630.3V634.3L335 621.3zM335 637.6L345 650.6V654.6L335 641.6zM335 657.9L345 670.9V674.9L335 661.9zM335 678.2L345 691.2V695.2L335 682.2zM335 698.5L345 711.5V715.5L335 702.5zM335 718.8L345 731.8V735.8L335 722.8zM335 739.1L345 752.1V756.1L335 743.1zM335 759.4L345 772.4V776.4L335 763.4zM335 779.7L345 792.7V796.7L335 783.7zM335 800L345 813V817L335 804zM335 820.3L345 833.3V837.3L335 824.3zM335 840.6L345 853.6V857.6L335 844.6zM335 860.9L345 873.9V877.9L335 864.9zM335 881.2L345 894.2V898.2L335 885.2zM335 901.5L345 914.5V918.5L335 905.5zM335 921.8L345 934.8V938.8L335 925.8zM335 942.1L345 955.1V959.1L335 946.1zM335 962.4L345 975.4V979.4L335 966.4zM335 982.7L345 995.7V999.7L335 986.7zM335 1003L345 1016V1020L335 1007zM335 1023.3L345 1036.3V1040.3L335 1027.3zM335 1043.6L345 1056.6V1060.6L335 1047.6zM356 619L364 632V636L356 623zM356 639.3L364 652.3V656.3L356 643.3zM356 659.6L364 672.6V676.6L356 663.6zM356 679.9L364 692.9V696.9L356 683.9zM356 700.2L364 713.2V717.2L356 704.2zM356 720.5L364 733.5V737.5L356 724.5zM356 740.8L364 753.8V757.8L356 744.8zM356 761.1L364 774.1V778.1L356 765.1zM356 781.4L364 794.4V798.4L356 785.4zM356 801.7L364 814.7V818.7L356 805.7zM356 822L364 835V839L356 826zM356 842.3L364 855.3V859.3L356 846.3zM356 862.6L364 875.6V879.6L356 866.6zM356 882.9L364 895.9V899.9L356 886.9zM356 903.2L364 916.2V920.2L356 907.2zM356 923.5L364 936.5V940.5L356 927.5zM356 943.8L364 956.8V960.8L356 947.8zM356 964.1L364 977.1V981.1L356 968.1zM356 984.4L364 997.4V1001.4L356 988.4zM356 1004.7L364 1017.7V1021.7L356 1008.7zM356 1025L364 1038V1042L356 1029zM356 1045.3L364 1058.3V1062.3L356 1049.3zM356 1065.6L364 1078.6V1082.6L356 1069.6zM356 1085.9L364 1098.9V1102.9L356 1089.9zM373 645L381 658V662L373 649zM373 665.3L381 678.3V682.3L373 669.3zM373 685.6L381 698.6V702.6L373 689.6zM373 705.9L381 718.9V722.9L373 709.9zM373 726.2L381 739.2V743.2L373 730.2zM373 746.5L381 759.5V763.5L373 750.5zM373 766.8L381 779.8V783.8L373 770.8zM373 787.1L381 800.1V804.1L373 791.1zM373 807.4L381 820.4V824.4L373 811.4zM373 827.7L381 840.7V844.7L373 831.7zM373 848L381 861V865L373 852zM373 868.3L381 881.3V885.3L373 872.3zM373 888.6L381 901.6V905.6L373 892.6zM373 908.9L381 921.9V925.9L373 912.9zM373 929.2L381 942.2V946.2L373 933.2zM373 949.5L381 962.5V966.5L373 953.5zM373 969.8L381 982.8V986.8L373 973.8zM373 990.1L381 1003.1V1007.1L373 994.1zM373 1010.4L381 1023.4V1027.4L373 1014.4zM373 1030.7L381 1043.7V1047.7L373 1034.7zM373 1051L381 1064V1068L373 1055zM373 1071.3L381 1084.3V1088.3L373 1075.3zM373 1091.6L381 1104.6V1108.6L373 1095.6zM373 1111.9L381 1124.9V1128.9L373 1115.9zM396 697L408 710V714L396 701zM396 717.3L408 730.3V734.3L396 721.3zM396 737.6L408 750.6V754.6L396 741.6zM396 757.9L408 770.9V774.9L396 761.9zM396 778.2L408 791.2V795.2L396 782.2zM396 798.5L408 811.5V815.5L396 802.5zM396 818.8L408 831.8V835.8L396 822.8zM396 839.1L408 852.1V856.1L396 843.1zM396 859.4L408 872.4V876.4L396 863.4zM396 879.7L408 892.7V896.7L396 883.7zM396 900L408 913V917L396 904zM396 920.3L408 933.3V937.3L396 924.3zM396 940.6L408 953.6V957.6L396 944.6zM396 960.9L408 973.9V977.9L396 964.9zM396 981.2L408 994.2V998.2L396 985.2zM396 1001.5L408 1014.5V1018.5L396 1005.5zM396 1021.8L408 1034.8V1038.8L396 1025.8zM396 1042.1L408 1055.1V1059.1L396 1046.1zM396 1062.4L408 1075.4V1079.4L396 1066.4zM396 1082.7L408 1095.7V1099.7L396 1086.7zM396 1103L408 1116V1120L396 1107zM396 1123.3L408 1136.3V1140.3L396 1127.3zM396 1143.6L408 1156.6V1160.6L396 1147.6z" fill="#e38b1c"/>
<polygon points="339,1040 345,1040 345,1090 339,1080" fill="#c9a59a" />
<polygon points="376,1122 384,1122 384,1162 376,1148" fill="#33b2d6" />
<clipPath id="c6"><polygon points="404,704 413,714 460,713.5 460,1168 404,1182"/></clipPath>
<g clip-path="url(#c6)"><g transform="matrix(1 -0.00893 0 1 404 714)">
<rect x="-30" y="-40" width="116" height="588" fill="#f2f2f2"/>
<line x1="10.8" y1="6.735" x2="10.8" y2="548" stroke="#6b6b6b" stroke-width="20.4" stroke-dasharray="12 8.3"/>
<line x1="0.6" y1="6.735" x2="0.6" y2="548" stroke="#6f86d8" stroke-width="0.9" stroke-dasharray="12 8.3"/>
<rect x="53.8" y="-40" width="2.2" height="588" fill="#6b6b6b"/>
<path d="M-30 3H86 M-30 23.3H86 M-30 43.6H86 M-30 63.9H86 M-30 84.2H86 M-30 104.5H86 M-30 124.8H86 M-30 145.1H86 M-30 165.4H86 M-30 185.7H86 M-30 206H86 M-30 226.3H86 M-30 246.6H86 M-30 266.9H86 M-30 287.2H86 M-30 307.5H86 M-30 327.8H86 M-30 348.1H86 M-30 368.4H86 M-30 388.7H86 M-30 409H86 M-30 429.3H86 M-30 449.6H86 M-30 469.9H86 M-30 490.2H86 M-30 510.5H86 M-30 530.8H86" stroke="#bdbdbd" stroke-width="0.8" fill="none"/>
<line x1="15" y1="14.7" x2="15" y2="548" stroke="#e38b1c" stroke-width="32" stroke-dasharray="5.6 14.7" opacity="0.32"/>
<line x1="15" y1="14.7" x2="15" y2="548" stroke="#e38b1c" stroke-width="32" stroke-dasharray="1.1 19.2" opacity="0.95"/>
<line x1="15" y1="18.7" x2="15" y2="548" stroke="#e38b1c" stroke-width="32" stroke-dasharray="1.3 19" opacity="0.95"/>
<line x1="15" y1="20.4" x2="15" y2="548" stroke="#767676" stroke-width="32" stroke-dasharray="2 18.3" opacity="1"/>
<line x1="15" y1="22.5" x2="15" y2="548" stroke="#d2d2d2" stroke-width="32" stroke-dasharray="0.9 19.4" opacity="1"/>
</g></g>
<polygon points="413,714 517,710 524,731 460,736 460,714" fill="#f2f2f2" />
<clipPath id="c7"><polygon points="460,734.5 527,729 527,1177 460,1178"/></clipPath>
<g clip-path="url(#c7)"><g transform="matrix(1 -0.08209 0 1 460 734.5)">
<rect x="-30" y="-40" width="127" height="568" fill="#fdd9cf"/>
<rect x="0" y="-40" width="2" height="568" fill="#6b6b6b"/>
<rect x="2" y="-40" width="13.4" height="568" fill="#f2f2f2"/>
<line x1="27.15" y1="5.5578" x2="27.15" y2="528" stroke="#6b6b6b" stroke-width="9.1" stroke-dasharray="14.616 5.684"/>
<line x1="22.6" y1="5.5578" x2="22.6" y2="528" stroke="#6f86d8" stroke-width="0.9" stroke-dasharray="14.616 5.684"/>
<rect x="46.8" y="-40" width="18.8" height="568" fill="#6b6b6b"/>
<rect x="56" y="-40" width="4" height="568" fill="#7082ec"/>
<path d="M-30 3H97 M-30 23.3H97 M-30 43.6H97 M-30 63.9H97 M-30 84.2H97 M-30 104.5H97 M-30 124.8H97 M-30 145.1H97 M-30 165.4H97 M-30 185.7H97 M-30 206H97 M-30 226.3H97 M-30 246.6H97 M-30 266.9H97 M-30 287.2H97 M-30 307.5H97 M-30 327.8H97 M-30 348.1H97 M-30 368.4H97 M-30 388.7H97 M-30 409H97 M-30 429.3H97 M-30 449.6H97 M-30 469.9H97 M-30 490.2H97 M-30 510.5H97" stroke="#c4aca4" stroke-width="0.8" fill="none"/>
<line x1="56.8" y1="14.7" x2="56.8" y2="528" stroke="#e38b1c" stroke-width="24" stroke-dasharray="5.6 14.7" opacity="0.32"/>
<line x1="56.8" y1="14.7" x2="56.8" y2="528" stroke="#e38b1c" stroke-width="24" stroke-dasharray="1.1 19.2" opacity="0.95"/>
<line x1="56.8" y1="18.7" x2="56.8" y2="528" stroke="#e38b1c" stroke-width="24" stroke-dasharray="1.3 19" opacity="0.95"/>
<line x1="56.8" y1="20.4" x2="56.8" y2="528" stroke="#767676" stroke-width="24" stroke-dasharray="2 18.3" opacity="1"/>
<line x1="56.8" y1="22.5" x2="56.8" y2="528" stroke="#d2d2d2" stroke-width="24" stroke-dasharray="0.9 19.4" opacity="1"/>
</g></g>
<polygon points="460,733 525,727.5 525,731 460,736.5" fill="#6b6b6b" />
<polygon points="497,716 511,715.5 512,727 498,728" fill="#c9d0f0" />
<polygon points="350,589.5 376,584 394,582 450,579 457.7,587 474,621 486,623.5 483,639 500.5,654 507,672 517,709 456.6,713.6 412.6,713.6 401.6,702.6 390.7,680.7 384,669.7 373,645.5 360,628 346.7,602.6 346.7,591.6" fill="#6b6b6b" stroke="#e8cfc8" stroke-width="1"/>
<polyline points="395,583 460,712" fill="none" stroke="#e8cfc8" stroke-width="1" />
<polyline points="405,582 470,712" fill="none" stroke="#e8cfc8" stroke-width="1" />
<polyline points="352,603 398,598" fill="none" stroke="#e8d8d2" stroke-width="1" />
<polyline points="362,626 405,620" fill="none" stroke="#e8d8d2" stroke-width="1" />
<polyline points="380,655 425,650" fill="none" stroke="#e8d8d2" stroke-width="1" />
<polyline points="395,690 440,685" fill="none" stroke="#e8d8d2" stroke-width="1" />
<polyline points="420,610 470,607" fill="none" stroke="#e8d8d2" stroke-width="1" />
<polyline points="432,640 490,636" fill="none" stroke="#e8d8d2" stroke-width="1" />
<polyline points="445,668 505,664" fill="none" stroke="#e8d8d2" stroke-width="1" />
<polyline points="455,690 512,686" fill="none" stroke="#e8d8d2" stroke-width="1" />
<polyline points="393,633 418,631 424,652 400,654 393,633" fill="none" stroke="#dedede" stroke-width="1" />
<clipPath id="c8"><polygon points="350,589.5 376,584 394,582 450,579 457.7,587 474,621 486,623.5 483,639 500.5,654 507,672 517,709 456.6,713.6 412.6,713.6 401.6,702.6 390.7,680.7 384,669.7 373,645.5 360,628 346.7,602.6 346.7,591.6"/></clipPath>
<path d="M463.7 653.0L484.5 650.7L487.2 655.8L466.4 658.1M469.4 681.7L483.0 680.2L486.0 686.1M436.9 625.2L444.4 624.4L447.9 631.3L440.5 632.1M458.9 633.9L472.1 632.5L475.5 639.0L462.3 640.5zM447.5 651.0L454.4 650.3L456.3 653.9M481.4 677.3L492.6 676.0L495.6 681.8M470.7 661.9L484.7 660.4L487.8 666.5L473.8 668.0M461.7 652.2L482.6 649.9L484.2 653.0L463.3 655.3zM440.6 623.1L447.7 622.3L451.1 629.0L444.0 629.8zM429.6 597.6L435.9 596.9L439.1 603.2M476.2 693.7L489.8 692.2L493.8 700.0L480.3 701.5zM446.4 611.6L463.2 609.7L465.4 614.1L448.7 616.0zM492.2 673.7L500.1 672.8L502.1 676.7M443.6 643.8L457.4 642.3L460.6 648.6M442.0 611.1L459.7 609.2L461.4 612.5L443.7 614.5zM487.0 702.1L493.0 701.4L496.7 708.6L490.7 709.3zM457.6 611.8L468.4 610.6L472.1 617.8L461.3 619.0M426.0 607.6L439.1 606.1L440.5 608.8L427.4 610.3zM430.2 598.4L437.6 597.5L440.5 603.3M438.2 632.9L454.1 631.1L455.8 634.5L439.9 636.2zM485.7 687.4L494.6 686.4L496.4 689.9M457.7 616.5L466.7 615.5L470.1 622.0L461.0 623.0zM499.0 687.8L507.7 686.8L510.2 691.7M449.6 648.9L459.7 647.8L463.1 654.3L453.0 655.4zM478.1 655.8L488.8 654.6L490.7 658.2L480.0 659.4M448.3 645.1L464.7 643.2L467.8 649.1" stroke="#ecd3cb" stroke-width="0.900" fill="none" clip-path="url(#c8)"/>
<polygon points="470,622 489,620.5 491,627 474,629" fill="#8a8a8a" />
<polygon points="490,652 503,651 505,659 494,660" fill="#8a8a8a" />
<polygon points="496,664 508,663 510,671 499,672" fill="#8a8a8a" />
<clipPath id="c9"><polygon points="540,675 882.5,651 882.5,979 540,1000"/></clipPath>
<g clip-path="url(#c9)"><g transform="matrix(1 -0.07007 0 1 540 675)">
<rect x="-30" y="-40" width="402.5" height="448" fill="#fdd9cf"/>
<rect x="1" y="-40" width="2.75" height="448" fill="#f2f2f2"/>
<rect x="3.75" y="-40" width="20" height="448" fill="#6b6b6b"/>
<line x1="49.125" y1="3.0704" x2="49.125" y2="408" stroke="#6b6b6b" stroke-width="9.25" stroke-dasharray="14.688 5.712"/>
<line x1="44.5" y1="3.0704" x2="44.5" y2="408" stroke="#6f86d8" stroke-width="0.9" stroke-dasharray="14.688 5.712"/>
<line x1="65.875" y1="3.0704" x2="65.875" y2="408" stroke="#6b6b6b" stroke-width="9.25" stroke-dasharray="14.688 5.712"/>
<line x1="61.25" y1="3.0704" x2="61.25" y2="408" stroke="#6f86d8" stroke-width="0.9" stroke-dasharray="14.688 5.712"/>
<line x1="96" y1="3.0704" x2="96" y2="408" stroke="#6b6b6b" stroke-width="9.5" stroke-dasharray="14.688 5.712"/>
<line x1="91.25" y1="3.0704" x2="91.25" y2="408" stroke="#6f86d8" stroke-width="0.9" stroke-dasharray="14.688 5.712"/>
<line x1="113.375" y1="3.0704" x2="113.375" y2="408" stroke="#6b6b6b" stroke-width="9.25" stroke-dasharray="14.688 5.712"/>
<line x1="108.75" y1="3.0704" x2="108.75" y2="408" stroke="#6f86d8" stroke-width="0.9" stroke-dasharray="14.688 5.712"/>
<rect x="131.25" y="-40" width="16.75" height="448" fill="#6b6b6b"/>
<line x1="170.875" y1="3.0704" x2="170.875" y2="408" stroke="#6b6b6b" stroke-width="9.25" stroke-dasharray="14.688 5.712"/>
<line x1="166.25" y1="3.0704" x2="166.25" y2="408" stroke="#6f86d8" stroke-width="0.9" stroke-dasharray="14.688 5.712"/>
<line x1="187.75" y1="3.0704" x2="187.75" y2="408" stroke="#6b6b6b" stroke-width="9.5" stroke-dasharray="14.688 5.712"/>
<line x1="183" y1="3.0704" x2="183" y2="408" stroke="#6f86d8" stroke-width="0.9" stroke-dasharray="14.688 5.712"/>
<rect x="206.25" y="-40" width="16.25" height="448" fill="#6b6b6b"/>
<rect x="235" y="-40" width="16.25" height="448" fill="#6b6b6b"/>
<line x1="268.375" y1="3.0704" x2="268.375" y2="408" stroke="#6b6b6b" stroke-width="9.25" stroke-dasharray="14.688 5.712"/>
<line x1="263.75" y1="3.0704" x2="263.75" y2="408" stroke="#6f86d8" stroke-width="0.9" stroke-dasharray="14.688 5.712"/>
<line x1="286.625" y1="3.0704" x2="286.625" y2="408" stroke="#6b6b6b" stroke-width="9.25" stroke-dasharray="14.688 5.712"/>
<line x1="282" y1="3.0704" x2="282" y2="408" stroke="#6f86d8" stroke-width="0.9" stroke-dasharray="14.688 5.712"/>
<line x1="310.875" y1="3.0704" x2="310.875" y2="408" stroke="#6b6b6b" stroke-width="9.25" stroke-dasharray="14.688 5.712"/>
<line x1="306.25" y1="3.0704" x2="306.25" y2="408" stroke="#6f86d8" stroke-width="0.9" stroke-dasharray="14.688 5.712"/>
<line x1="328.375" y1="3.0704" x2="328.375" y2="408" stroke="#6b6b6b" stroke-width="9.25" stroke-dasharray="14.688 5.712"/>
<line x1="323.75" y1="3.0704" x2="323.75" y2="408" stroke="#6f86d8" stroke-width="0.9" stroke-dasharray="14.688 5.712"/>
<path d="M-30 0.5H372.5 M-30 20.9H372.5 M-30 41.3H372.5 M-30 61.7H372.5 M-30 82.1H372.5 M-30 102.5H372.5 M-30 122.9H372.5 M-30 143.3H372.5 M-30 163.7H372.5 M-30 184.1H372.5 M-30 204.5H372.5 M-30 224.9H372.5 M-30 245.3H372.5 M-30 265.7H372.5 M-30 286.1H372.5 M-30 306.5H372.5 M-30 326.9H372.5 M-30 347.3H372.5 M-30 367.7H372.5 M-30 388.1H372.5" stroke="#c4aca4" stroke-width="0.8" fill="none"/>
<line x1="14.65" y1="12.3" x2="14.65" y2="408" stroke="#e38b1c" stroke-width="27.8" stroke-dasharray="5.6 14.8" opacity="0.32"/>
<line x1="14.65" y1="12.3" x2="14.65" y2="408" stroke="#e38b1c" stroke-width="27.8" stroke-dasharray="1.1 19.3" opacity="0.95"/>
<line x1="14.65" y1="16.3" x2="14.65" y2="408" stroke="#e38b1c" stroke-width="27.8" stroke-dasharray="1.3 19.1" opacity="0.95"/>
<line x1="14.65" y1="18" x2="14.65" y2="408" stroke="#767676" stroke-width="27.8" stroke-dasharray="2 18.4" opacity="1"/>
<line x1="14.65" y1="20.1" x2="14.65" y2="408" stroke="#d2d2d2" stroke-width="27.8" stroke-dasharray="0.9 19.5" opacity="1"/>
<line x1="140.525" y1="12.3" x2="140.525" y2="408" stroke="#e38b1c" stroke-width="24.55" stroke-dasharray="5.6 14.8" opacity="0.32"/>
<line x1="140.525" y1="12.3" x2="140.525" y2="408" stroke="#e38b1c" stroke-width="24.55" stroke-dasharray="1.1 19.3" opacity="0.95"/>
<line x1="140.525" y1="16.3" x2="140.525" y2="408" stroke="#e38b1c" stroke-width="24.55" stroke-dasharray="1.3 19.1" opacity="0.95"/>
<line x1="140.525" y1="18" x2="140.525" y2="408" stroke="#767676" stroke-width="24.55" stroke-dasharray="2 18.4" opacity="1"/>
<line x1="140.525" y1="20.1" x2="140.525" y2="408" stroke="#d2d2d2" stroke-width="24.55" stroke-dasharray="0.9 19.5" opacity="1"/>
<line x1="215.275" y1="12.3" x2="215.275" y2="408" stroke="#e38b1c" stroke-width="24.05" stroke-dasharray="5.6 14.8" opacity="0.32"/>
<line x1="215.275" y1="12.3" x2="215.275" y2="408" stroke="#e38b1c" stroke-width="24.05" stroke-dasharray="1.1 19.3" opacity="0.95"/>
<line x1="215.275" y1="16.3" x2="215.275" y2="408" stroke="#e38b1c" stroke-width="24.05" stroke-dasharray="1.3 19.1" opacity="0.95"/>
<line x1="215.275" y1="18" x2="215.275" y2="408" stroke="#767676" stroke-width="24.05" stroke-dasharray="2 18.4" opacity="1"/>
<line x1="215.275" y1="20.1" x2="215.275" y2="408" stroke="#d2d2d2" stroke-width="24.05" stroke-dasharray="0.9 19.5" opacity="1"/>
<line x1="244.025" y1="12.3" x2="244.025" y2="408" stroke="#e38b1c" stroke-width="24.05" stroke-dasharray="5.6 14.8" opacity="0.32"/>
<line x1="244.025" y1="12.3" x2="244.025" y2="408" stroke="#e38b1c" stroke-width="24.05" stroke-dasharray="1.1 19.3" opacity="0.95"/>
<line x1="244.025" y1="16.3" x2="244.025" y2="408" stroke="#e38b1c" stroke-width="24.05" stroke-dasharray="1.3 19.1" opacity="0.95"/>
<line x1="244.025" y1="18" x2="244.025" y2="408" stroke="#767676" stroke-width="24.05" stroke-dasharray="2 18.4" opacity="1"/>
<line x1="244.025" y1="20.1" x2="244.025" y2="408" stroke="#d2d2d2" stroke-width="24.05" stroke-dasharray="0.9 19.5" opacity="1"/>
</g></g>
<clipPath id="c10"><polygon points="882.5,651 914,652 914,974 882.5,977"/></clipPath>
<g clip-path="url(#c10)"><g transform="matrix(1 0.03175 0 1 882.5 651)">
<rect x="-30" y="-40" width="91.5" height="446" fill="#fdd9cf"/>
<rect x="0" y="-40" width="6.25" height="446" fill="#f2f2f2"/>
<rect x="6.25" y="-40" width="16.25" height="446" fill="#6b6b6b"/>
<path d="M-30 0.5H61.5 M-30 20.9H61.5 M-30 41.3H61.5 M-30 61.7H61.5 M-30 82.1H61.5 M-30 102.5H61.5 M-30 122.9H61.5 M-30 143.3H61.5 M-30 163.7H61.5 M-30 184.1H61.5 M-30 204.5H61.5 M-30 224.9H61.5 M-30 245.3H61.5 M-30 265.7H61.5 M-30 286.1H61.5 M-30 306.5H61.5 M-30 326.9H61.5 M-30 347.3H61.5 M-30 367.7H61.5" stroke="#c4aca4" stroke-width="0.8" fill="none"/>
<line x1="14.375" y1="12.3" x2="14.375" y2="406" stroke="#e38b1c" stroke-width="16.25" stroke-dasharray="5.6 14.8" opacity="0.32"/>
<line x1="14.375" y1="12.3" x2="14.375" y2="406" stroke="#e38b1c" stroke-width="16.25" stroke-dasharray="1.1 19.3" opacity="0.95"/>
<line x1="14.375" y1="16.3" x2="14.375" y2="406" stroke="#e38b1c" stroke-width="16.25" stroke-dasharray="1.3 19.1" opacity="0.95"/>
<line x1="14.375" y1="18" x2="14.375" y2="406" stroke="#767676" stroke-width="16.25" stroke-dasharray="2 18.4" opacity="1"/>
<line x1="14.375" y1="20.1" x2="14.375" y2="406" stroke="#d2d2d2" stroke-width="16.25" stroke-dasharray="0.9 19.5" opacity="1"/>
</g></g>
<path d="M903 664L920 659V668L903 673zM903 684.4L920 679.4V688.4L903 693.4zM903 704.8L920 699.8V708.8L903 713.8zM903 725.2L920 720.2V729.2L903 734.2zM903 745.6L920 740.6V749.6L903 754.6zM903 766L920 761V770L903 775zM903 786.4L920 781.4V790.4L903 795.4zM903 806.8L920 801.8V810.8L903 815.8zM903 827.2L920 822.2V831.2L903 836.2zM903 847.6L920 842.6V851.6L903 856.6zM903 868L920 863V872L903 877zM903 888.4L920 883.4V892.4L903 897.4zM903 908.8L920 903.8V912.8L903 917.8zM903 929.2L920 924.2V933.2L903 938.2zM903 949.6L920 944.6V953.6L903 958.6z" fill="#6b6b6b"/>
<path d="M907 660L921 655V660L907 665zM907 680.4L921 675.4V680.4L907 685.4zM907 700.8L921 695.8V700.8L907 705.8zM907 721.2L921 716.2V721.2L907 726.2zM907 741.6L921 736.6V741.6L907 746.6zM907 762L921 757V762L907 767zM907 782.4L921 777.4V782.4L907 787.4zM907 802.8L921 797.8V802.8L907 807.8zM907 823.2L921 818.2V823.2L907 828.2zM907 843.6L921 838.6V843.6L907 848.6zM907 864L921 859V864L907 869zM907 884.4L921 879.4V884.4L907 889.4zM907 904.8L921 899.8V904.8L907 909.8zM907 925.2L921 920.2V925.2L907 930.2zM907 945.6L921 940.6V945.6L907 950.6zM907 966L921 961V966L907 971z" fill="#e38b1c"/>
<polygon points="525,737 541,722 541,1003 525,1008" fill="#6b6b6b" />
<path d="M530 690L542 698V706L530 698zM530 710.4L542 718.4V726.4L530 718.4zM530 730.8L542 738.8V746.8L530 738.8zM530 751.2L542 759.2V767.2L530 759.2zM530 771.6L542 779.6V787.6L530 779.6zM530 792L542 800V808L530 800zM530 812.4L542 820.4V828.4L530 820.4zM530 832.8L542 840.8V848.8L530 840.8zM530 853.2L542 861.2V869.2L530 861.2zM530 873.6L542 881.6V889.6L530 881.6zM530 894L542 902V910L530 902zM530 914.4L542 922.4V930.4L530 922.4zM530 934.8L542 942.8V950.8L530 942.8zM530 955.2L542 963.2V971.2L530 963.2zM530 975.6L542 983.6V991.6L530 983.6zM530 996L542 1004V1012L530 1004z" fill="#6b6b6b"/>
<path d="M524 686L541 696V701L524 691zM524 706.4L541 716.4V721.4L524 711.4zM524 726.8L541 736.8V741.8L524 731.8zM524 747.2L541 757.2V762.2L524 752.2zM524 767.6L541 777.6V782.6L524 772.6zM524 788L541 798V803L524 793zM524 808.4L541 818.4V823.4L524 813.4zM524 828.8L541 838.8V843.8L524 833.8zM524 849.2L541 859.2V864.2L524 854.2zM524 869.6L541 879.6V884.6L524 874.6zM524 890L541 900V905L524 895zM524 910.4L541 920.4V925.4L524 915.4zM524 930.8L541 940.8V945.8L524 935.8zM524 951.2L541 961.2V966.2L524 956.2zM524 971.6L541 981.6V986.6L524 976.6zM524 992L541 1002V1007L524 997z" fill="#e38b1c"/>
<polygon points="531,629 660,620 830,607.5 859,608 867.5,625 897.5,624 912.5,636 913,652 882.5,651 540,675 537.5,655" fill="#6b6b6b" stroke="#e8cfc8" stroke-width="1"/>
<polyline points="536,650 878,626" fill="none" stroke="#f0d2c8" stroke-width="1.4" />
<polyline points="546,634 590,632 600,644 660,640 650,627 700,624 720,636 850,627 840,612" fill="none" stroke="#e2e2e2" stroke-width="0.9" />
<polyline points="687,647 692,662" fill="none" stroke="#e2e2e2" stroke-width="0.9" />
<polygon points="1316,838 1361,856 1366,870 1366,1202 1330,1182 1316,1170" fill="#fdd9cf" />
<polygon points="1326,846 1330,848 1330,1180 1326,1177" fill="#d9d3f0" />
<clipPath id="c11"><polygon points="1316,838 1361,856 1366,870 1366,1202 1330,1182 1316,1170"/></clipPath>
<path d="M1316 846L1366 872 M1316 866.6L1366 892.6 M1316 887.2L1366 913.2 M1316 907.8L1366 933.8 M1316 928.4L1366 954.4 M1316 949L1366 975 M1316 969.6L1366 995.6 M1316 990.2L1366 1016.2 M1316 1010.8L1366 1036.8 M1316 1031.4L1366 1057.4 M1316 1052L1366 1078 M1316 1072.6L1366 1098.6 M1316 1093.2L1366 1119.2 M1316 1113.8L1366 1139.8 M1316 1134.4L1366 1160.4 M1316 1155L1366 1181" stroke="#c8c8c8" stroke-width="0.8" fill="none" clip-path="url(#c11)"/>
<path d="M1307 850L1318 858V863L1307 855zM1307 870.6L1318 878.6V883.6L1307 875.6zM1307 891.2L1318 899.2V904.2L1307 896.2zM1307 911.8L1318 919.8V924.8L1307 916.8zM1307 932.4L1318 940.4V945.4L1307 937.4zM1307 953L1318 961V966L1307 958zM1307 973.6L1318 981.6V986.6L1307 978.6zM1307 994.2L1318 1002.2V1007.2L1307 999.2zM1307 1014.8L1318 1022.8V1027.8L1307 1019.8zM1307 1035.4L1318 1043.4V1048.4L1307 1040.4zM1307 1056L1318 1064V1069L1307 1061zM1307 1076.6L1318 1084.6V1089.6L1307 1081.6zM1307 1097.2L1318 1105.2V1110.2L1307 1102.2zM1307 1117.8L1318 1125.8V1130.8L1307 1122.8zM1307 1138.4L1318 1146.4V1151.4L1307 1143.4z" fill="#e38b1c"/>
<clipPath id="c12"><polygon points="1366,870 1665,851 1665,1181 1366,1200"/></clipPath>
<g clip-path="url(#c12)"><g transform="matrix(1 -0.06355 0 1 1366 870)">
<rect x="-30" y="-40" width="359" height="450" fill="#fdd9cf"/>
<rect x="3" y="-40" width="2.25" height="450" fill="#7082ec"/>
<rect x="5.25" y="-40" width="16.25" height="450" fill="#6b6b6b"/>
<rect x="21.5" y="-40" width="8.75" height="450" fill="#f2f2f2"/>
<line x1="48.375" y1="0.0956" x2="48.375" y2="410" stroke="#6b6b6b" stroke-width="8.75" stroke-dasharray="14.832 5.768"/>
<line x1="44" y1="0.0956" x2="44" y2="410" stroke="#6f86d8" stroke-width="0.9" stroke-dasharray="14.832 5.768"/>
<line x1="65.875" y1="0.0956" x2="65.875" y2="410" stroke="#6b6b6b" stroke-width="8.75" stroke-dasharray="14.832 5.768"/>
<line x1="61.5" y1="0.0956" x2="61.5" y2="410" stroke="#6f86d8" stroke-width="0.9" stroke-dasharray="14.832 5.768"/>
<rect x="80.25" y="-40" width="20" height="450" fill="#f2f2f2"/>
<line x1="108.375" y1="0.0956" x2="108.375" y2="410" stroke="#6b6b6b" stroke-width="8.75" stroke-dasharray="14.832 5.768"/>
<line x1="104" y1="0.0956" x2="104" y2="410" stroke="#6f86d8" stroke-width="0.9" stroke-dasharray="14.832 5.768"/>
<rect x="124" y="-40" width="15" height="450" fill="#6b6b6b"/>
<rect x="210.25" y="-40" width="16.25" height="450" fill="#6b6b6b"/>
<line x1="244.625" y1="0.0956" x2="244.625" y2="410" stroke="#6b6b6b" stroke-width="8.75" stroke-dasharray="14.832 5.768"/>
<line x1="240.25" y1="0.0956" x2="240.25" y2="410" stroke="#6f86d8" stroke-width="0.9" stroke-dasharray="14.832 5.768"/>
<rect x="251.5" y="-40" width="22.5" height="450" fill="#f2f2f2"/>
<line x1="282.125" y1="0.0956" x2="282.125" y2="410" stroke="#6b6b6b" stroke-width="8.75" stroke-dasharray="14.832 5.768"/>
<line x1="277.75" y1="0.0956" x2="277.75" y2="410" stroke="#6f86d8" stroke-width="0.9" stroke-dasharray="14.832 5.768"/>
<path d="M-30 -2.5H329 M-30 18.1H329 M-30 38.7H329 M-30 59.3H329 M-30 79.9H329 M-30 100.5H329 M-30 121.1H329 M-30 141.7H329 M-30 162.3H329 M-30 182.9H329 M-30 203.5H329 M-30 224.1H329 M-30 244.7H329 M-30 265.3H329 M-30 285.9H329 M-30 306.5H329 M-30 327.1H329 M-30 347.7H329 M-30 368.3H329" stroke="#c4aca4" stroke-width="0.8" fill="none"/>
<line x1="14.275" y1="9.5" x2="14.275" y2="410" stroke="#e38b1c" stroke-width="24.05" stroke-dasharray="5.6 15" opacity="0.32"/>
<line x1="14.275" y1="9.5" x2="14.275" y2="410" stroke="#e38b1c" stroke-width="24.05" stroke-dasharray="1.1 19.5" opacity="0.95"/>
<line x1="14.275" y1="13.5" x2="14.275" y2="410" stroke="#e38b1c" stroke-width="24.05" stroke-dasharray="1.3 19.3" opacity="0.95"/>
<line x1="14.275" y1="15.2" x2="14.275" y2="410" stroke="#767676" stroke-width="24.05" stroke-dasharray="2 18.6" opacity="1"/>
<line x1="14.275" y1="17.3" x2="14.275" y2="410" stroke="#d2d2d2" stroke-width="24.05" stroke-dasharray="0.9 19.7" opacity="1"/>
<line x1="132.4" y1="9.5" x2="132.4" y2="410" stroke="#e38b1c" stroke-width="22.8" stroke-dasharray="5.6 15" opacity="0.32"/>
<line x1="132.4" y1="9.5" x2="132.4" y2="410" stroke="#e38b1c" stroke-width="22.8" stroke-dasharray="1.1 19.5" opacity="0.95"/>
<line x1="132.4" y1="13.5" x2="132.4" y2="410" stroke="#e38b1c" stroke-width="22.8" stroke-dasharray="1.3 19.3" opacity="0.95"/>
<line x1="132.4" y1="15.2" x2="132.4" y2="410" stroke="#767676" stroke-width="22.8" stroke-dasharray="2 18.6" opacity="1"/>
<line x1="132.4" y1="17.3" x2="132.4" y2="410" stroke="#d2d2d2" stroke-width="22.8" stroke-dasharray="0.9 19.7" opacity="1"/>
<line x1="219.275" y1="9.5" x2="219.275" y2="410" stroke="#e38b1c" stroke-width="24.05" stroke-dasharray="5.6 15" opacity="0.32"/>
<line x1="219.275" y1="9.5" x2="219.275" y2="410" stroke="#e38b1c" stroke-width="24.05" stroke-dasharray="1.1 19.5" opacity="0.95"/>
<line x1="219.275" y1="13.5" x2="219.275" y2="410" stroke="#e38b1c" stroke-width="24.05" stroke-dasharray="1.3 19.3" opacity="0.95"/>
<line x1="219.275" y1="15.2" x2="219.275" y2="410" stroke="#767676" stroke-width="24.05" stroke-dasharray="2 18.6" opacity="1"/>
<line x1="219.275" y1="17.3" x2="219.275" y2="410" stroke="#d2d2d2" stroke-width="24.05" stroke-dasharray="0.9 19.7" opacity="1"/>
</g></g>
<path d="M1354 880L1370 889V897L1354 888zM1354 900.6L1370 909.6V917.6L1354 908.6zM1354 921.2L1370 930.2V938.2L1354 929.2zM1354 941.8L1370 950.8V958.8L1354 949.8zM1354 962.4L1370 971.4V979.4L1354 970.4zM1354 983L1370 992V1000L1354 991zM1354 1003.6L1370 1012.6V1020.6L1354 1011.6zM1354 1024.2L1370 1033.2V1041.2L1354 1032.2zM1354 1044.8L1370 1053.8V1061.8L1354 1052.8zM1354 1065.4L1370 1074.4V1082.4L1354 1073.4zM1354 1086L1370 1095V1103L1354 1094zM1354 1106.6L1370 1115.6V1123.6L1354 1114.6zM1354 1127.2L1370 1136.2V1144.2L1354 1135.2zM1354 1147.8L1370 1156.8V1164.8L1354 1155.8zM1354 1168.4L1370 1177.4V1185.4L1354 1176.4zM1354 1189L1370 1198V1206L1354 1197z" fill="#6b6b6b"/>
<path d="M1354 876L1369 885V890L1354 881zM1354 896.6L1369 905.6V910.6L1354 901.6zM1354 917.2L1369 926.2V931.2L1354 922.2zM1354 937.8L1369 946.8V951.8L1354 942.8zM1354 958.4L1369 967.4V972.4L1354 963.4zM1354 979L1369 988V993L1354 984zM1354 999.6L1369 1008.6V1013.6L1354 1004.6zM1354 1020.2L1369 1029.2V1034.2L1354 1025.2zM1354 1040.8L1369 1049.8V1054.8L1354 1045.8zM1354 1061.4L1369 1070.4V1075.4L1354 1066.4zM1354 1082L1369 1091V1096L1354 1087zM1354 1102.6L1369 1111.6V1116.6L1354 1107.6zM1354 1123.2L1369 1132.2V1137.2L1354 1128.2zM1354 1143.8L1369 1152.8V1157.8L1354 1148.8zM1354 1164.4L1369 1173.4V1178.4L1354 1169.4zM1354 1185L1369 1194V1199L1354 1190z" fill="#e38b1c"/>
<clipPath id="c13"><polygon points="1665,851 1700,852 1700,1179 1665,1181"/></clipPath>
<g clip-path="url(#c13)"><g transform="matrix(1 0.02857 0 1 1665 851)">
<rect x="-30" y="-40" width="95" height="450" fill="#fdd9cf"/>
<rect x="0" y="-40" width="3.75" height="450" fill="#f2f2f2"/>
<rect x="3.75" y="-40" width="13.75" height="450" fill="#6b6b6b"/>
<rect x="17.5" y="-40" width="4.5" height="450" fill="#f2f2f2"/>
<path d="M-30 -2.5H65 M-30 18.1H65 M-30 38.7H65 M-30 59.3H65 M-30 79.9H65 M-30 100.5H65 M-30 121.1H65 M-30 141.7H65 M-30 162.3H65 M-30 182.9H65 M-30 203.5H65 M-30 224.1H65 M-30 244.7H65 M-30 265.3H65 M-30 285.9H65 M-30 306.5H65 M-30 327.1H65 M-30 347.7H65 M-30 368.3H65" stroke="#c4aca4" stroke-width="0.8" fill="none"/>
<line x1="10.625" y1="9.5" x2="10.625" y2="410" stroke="#e38b1c" stroke-width="13.75" stroke-dasharray="5.6 15" opacity="0.32"/>
<line x1="10.625" y1="9.5" x2="10.625" y2="410" stroke="#e38b1c" stroke-width="13.75" stroke-dasharray="1.1 19.5" opacity="0.95"/>
<line x1="10.625" y1="13.5" x2="10.625" y2="410" stroke="#e38b1c" stroke-width="13.75" stroke-dasharray="1.3 19.3" opacity="0.95"/>
<line x1="10.625" y1="15.2" x2="10.625" y2="410" stroke="#767676" stroke-width="13.75" stroke-dasharray="2 18.6" opacity="1"/>
<line x1="10.625" y1="17.3" x2="10.625" y2="410" stroke="#d2d2d2" stroke-width="13.75" stroke-dasharray="0.9 19.7" opacity="1"/>
</g></g>
<path d="M1684 862L1700 872V883.5L1684 873.5zM1684 882.6L1700 892.6V904.1L1684 894.1zM1684 903.2L1700 913.2V924.7L1684 914.7zM1684 923.8L1700 933.8V945.3L1684 935.3zM1684 944.4L1700 954.4V965.9L1684 955.9zM1684 965L1700 975V986.5L1684 976.5zM1684 985.6L1700 995.6V1007.1L1684 997.1zM1684 1006.2L1700 1016.2V1027.7L1684 1017.7zM1684 1026.8L1700 1036.8V1048.3L1684 1038.3zM1684 1047.4L1700 1057.4V1068.9L1684 1058.9zM1684 1068L1700 1078V1089.5L1684 1079.5zM1684 1088.6L1700 1098.6V1110.1L1684 1100.1zM1684 1109.2L1700 1119.2V1130.7L1684 1120.7zM1684 1129.8L1700 1139.8V1151.3L1684 1141.3zM1684 1150.4L1700 1160.4V1171.9L1684 1161.9z" fill="#6b6b6b"/>
<path d="M1686 858L1700 870V875L1686 863zM1686 878.6L1700 890.6V895.6L1686 883.6zM1686 899.2L1700 911.2V916.2L1686 904.2zM1686 919.8L1700 931.8V936.8L1686 924.8zM1686 940.4L1700 952.4V957.4L1686 945.4zM1686 961L1700 973V978L1686 966zM1686 981.6L1700 993.6V998.6L1686 986.6zM1686 1002.2L1700 1014.2V1019.2L1686 1007.2zM1686 1022.8L1700 1034.8V1039.8L1686 1027.8zM1686 1043.4L1700 1055.4V1060.4L1686 1048.4zM1686 1064L1700 1076V1081L1686 1069zM1686 1084.6L1700 1096.6V1101.6L1686 1089.6zM1686 1105.2L1700 1117.2V1122.2L1686 1110.2zM1686 1125.8L1700 1137.8V1142.8L1686 1130.8zM1686 1146.4L1700 1158.4V1163.4L1686 1151.4zM1686 1167L1700 1179V1184L1686 1172z" fill="#e38b1c"/>
<polygon points="1366,1200 1665,1181 1697,1179 1697,1217 1367.5,1241" fill="#fdd9cf" />
<polygon points="1367.5,1208 1396,1206.1 1396,1233.1 1367.5,1235" fill="#f2f2f2" />
<polygon points="1407.5,1204.3 1435,1202.5 1435,1230.5 1407.5,1232.3" fill="#f2f2f2" />
<polygon points="1446,1200.8 1462,1199.7 1462,1228.7 1446,1229.8" fill="#f2f2f2" />
<polygon points="1465,1193.5 1507.5,1190.7 1507.5,1225.7 1465,1228.5" fill="#33b2d6" />
<polygon points="1465,1193.5 1507.5,1190.7 1507.5,1200.7 1465,1203.5" fill="#2fc3ee" />
<polygon points="1625,1188.8 1637.5,1188 1637.5,1217 1625,1217.8" fill="#f2f2f2" />
<polygon points="1639,1185.9 1650,1185.2 1650,1216.2 1639,1216.9" fill="#6b6b6b" />
<polygon points="1547,1219 1563,1218 1563,1222 1547,1223" fill="#6b6b6b" />
<polygon points="1576,1218.1 1612,1215.7 1612,1218.7 1576,1221.1" fill="#6b6b6b" />
<polygon points="1320,834 1345,827.5 1535,812.5 1652.5,805 1686,806 1695,822.5 1697.5,852.5 1665,851 1366,870 1361,856 1326,840" fill="#6b6b6b" stroke="#e8cfc8" stroke-width="1"/>
<polyline points="1322,838 1345,832 1690,812" fill="none" stroke="#f0d2c8" stroke-width="1.3" />
<polyline points="1352,845 1668,826 1680,830" fill="none" stroke="#f0d2c8" stroke-width="1.3" />
<polyline points="1376,849 1500,841 1504,849 1560,845 1556,838 1670,831" fill="none" stroke="#e2e2e2" stroke-width="0.9" />
<polyline points="1535,813 1545,833" fill="none" stroke="#e8cfc8" stroke-width="1" />
<polygon points="1694,1080 1713,1080 1713,1108 1708,1113 1694,1113" fill="#fdd9cf" />
<polygon points="1692.5,1149.3 1723.9,1148 1723.9,1182 1697,1184" fill="#359db5" />
<polygon points="1715.5,1148.4 1723.9,1148 1723.9,1182 1715.5,1182.6" fill="#5aa0f0" />
<polygon points="1650,1179 1697,1177.5 1697,1211 1650,1214.6" fill="#fdd9cf" />
<polygon points="1642.5,1182.6 1650,1182 1650,1212 1642.5,1212.6" fill="#8a6f6a" />
<polyline points="850,1022 987,1010 1008,1055" fill="none" stroke="#e0e0e0" stroke-width="1.2" />
<polygon points="872,1064 1008,1055 1010,1083 873,1089" fill="#f2f2f2" />
<polygon points="949,1067 1001,1064 1001,1080 949,1084.5" fill="#6b6b6b" />
<g stroke="#f0c9bd" stroke-width="1" fill="none">
<path d="M864 1026L900 1023"/>
<path d="M866.2 1030.6L902.2 1027.6"/>
<path d="M868.4 1035.2L904.4 1032.2"/>
<path d="M870.6 1039.8L906.6 1036.8"/>
<path d="M872.8 1044.4L908.8 1041.4"/>
<path d="M875 1049L911 1046"/>
<path d="M877.2 1053.6L913.2 1050.6"/>
<path d="M879.4 1058.2L915.4 1055.2"/>
</g>
<polygon points="895,1122 1216,1097 1226,1118 904,1141" fill="#6b6b6b" stroke="#e8cfc8" stroke-width="1"/>
<polyline points="898,1130 1222,1107" fill="none" stroke="#e8cfc8" stroke-width="1" />
<polyline points="940,1116.5 950,1137.7" fill="none" stroke="#e8cfc8" stroke-width="0.9" />
<polyline points="982,1113.3 992,1134.7" fill="none" stroke="#e8cfc8" stroke-width="0.9" />
<polyline points="1024,1110 1034,1131.7" fill="none" stroke="#e8cfc8" stroke-width="0.9" />
<polyline points="1066,1106.7 1076,1128.7" fill="none" stroke="#e8cfc8" stroke-width="0.9" />
<polyline points="1108,1103.5 1118,1125.7" fill="none" stroke="#e8cfc8" stroke-width="0.9" />
<polyline points="1150,1100.2 1160,1122.7" fill="none" stroke="#e8cfc8" stroke-width="0.9" />
<polyline points="1192,1097 1202,1119.7" fill="none" stroke="#e8cfc8" stroke-width="0.9" />
<polygon points="904,1141 1226,1118 1234,1130 1247,1172 1213,1165 918,1186" fill="#fdd9cf" />
<polygon points="919.3,1146.4 949,1144.3 949,1159.3 919.3,1161.4" fill="#6b6b6b" />
<polygon points="919.3,1167.9 949,1165.8 949,1180.8 919.3,1182.9" fill="#6b6b6b" />
<polygon points="966.8,1143 978.7,1142.2 978.7,1157.2 966.8,1158" fill="#6b6b6b" />
<polygon points="966.8,1164.5 978.7,1163.7 978.7,1178.7 966.8,1179.5" fill="#6b6b6b" />
<polygon points="990.6,1141.3 1008.4,1140 1008.4,1155 990.6,1156.3" fill="#6b6b6b" />
<polygon points="990.6,1162.8 1008.4,1161.5 1008.4,1176.5 990.6,1177.8" fill="#6b6b6b" />
<polygon points="1026.2,1138.8 1055.8,1136.7 1055.8,1151.7 1026.2,1153.8" fill="#6b6b6b" />
<polygon points="1026.2,1160.3 1055.8,1158.2 1055.8,1173.2 1026.2,1175.3" fill="#6b6b6b" />
<polygon points="1078.1,1135.1 1107.8,1132.9 1107.8,1147.9 1078.1,1150.1" fill="#6b6b6b" />
<polygon points="1078.1,1156.6 1107.8,1154.4 1107.8,1169.4 1078.1,1171.6" fill="#6b6b6b" />
<polygon points="1125.6,1131.7 1138.9,1130.7 1138.9,1145.7 1125.6,1146.7" fill="#6b6b6b" />
<polygon points="1125.6,1153.2 1138.9,1152.2 1138.9,1167.2 1125.6,1168.2" fill="#6b6b6b" />
<polygon points="1156.7,1129.4 1167.1,1128.7 1167.1,1143.7 1156.7,1144.4" fill="#6b6b6b" />
<polygon points="1156.7,1150.9 1167.1,1150.2 1167.1,1165.2 1156.7,1165.9" fill="#6b6b6b" />
<polygon points="1184.9,1127.4 1214.6,1125.3 1214.6,1140.3 1184.9,1142.4" fill="#6b6b6b" />
<polygon points="1184.9,1148.9 1214.6,1146.8 1214.6,1161.8 1184.9,1163.9" fill="#6b6b6b" />
<polygon points="1214.6,1142.8 1228,1141.9 1228,1161.9 1214.6,1162.8" fill="#f2f2f2" />
<polyline points="908,1163 1240,1141" fill="none" stroke="#fdd9cf" stroke-width="2.5" />
<polygon points="1248.7,1157 1281,1193 1281,1236 1265,1228.5 1248.7,1175" fill="#f3cfc4" />
<polygon points="1281,1204.7 1339,1201.8 1339,1233 1281,1237.4" fill="#fdd9cf" />
<polygon points="1284,1221 1294.5,1220.5 1294.5,1236 1284,1236.6" fill="#6b6b6b" />
<polygon points="1311,1219.6 1320,1219 1320,1234 1311,1234.7" fill="#6b6b6b" />
<polygon points="1339,1203 1366,1201.8 1366,1231.5 1340.7,1233" fill="#33b2d6" />
<polyline points="1216,1097 1252,1094 1272,1100 1290,1140" fill="none" stroke="#e8cfc8" stroke-width="1" />
<polyline points="1216,1097 1250,1095" fill="none" stroke="#3aa0b8" stroke-width="1.2" />
<polygon points="510,1044 514,1044 522.5,1080 522.5,1306 512,1288 510,1230" fill="#fdd9cf" />
<polygon points="512.5,1060 518,1072 518,1270 512.5,1262" fill="#c4c4c4" />
<path d="M497 1050L513 1059V1068L497 1059zM497 1070.1L513 1079.1V1088.1L497 1079.1zM497 1090.2L513 1099.2V1108.2L497 1099.2zM497 1110.3L513 1119.3V1128.3L497 1119.3zM497 1130.4L513 1139.4V1148.4L497 1139.4zM497 1150.5L513 1159.5V1168.5L497 1159.5zM497 1170.6L513 1179.6V1188.6L497 1179.6zM497 1190.7L513 1199.7V1208.7L497 1199.7zM497 1210.8L513 1219.8V1228.8L497 1219.8zM497 1230.9L513 1239.9V1248.9L497 1239.9zM497 1251L513 1260V1269L497 1260z" fill="#6b6b6b"/>
<path d="M497 1046L512 1055V1060.5L497 1051.5zM497 1066.1L512 1075.1V1080.6L497 1071.6zM497 1086.2L512 1095.2V1100.7L497 1091.7zM497 1106.3L512 1115.3V1120.8L497 1111.8zM497 1126.4L512 1135.4V1140.9L497 1131.9zM497 1146.5L512 1155.5V1161L497 1152zM497 1166.6L512 1175.6V1181.1L497 1172.1zM497 1186.7L512 1195.7V1201.2L497 1192.2zM497 1206.8L512 1215.8V1221.3L497 1212.3zM497 1226.9L512 1235.9V1241.4L497 1232.4zM497 1247L512 1256V1261.5L497 1252.5z" fill="#e38b1c"/>
<clipPath id="c14"><polygon points="522.5,1080 840,1059 840,1241 522.5,1262"/></clipPath>
<g clip-path="url(#c14)"><g transform="matrix(1 -0.06614 0 1 522.5 1080)">
<rect x="-30" y="-40" width="377.5" height="302" fill="#fdd9cf"/>
<rect x="0" y="-40" width="3.75" height="302" fill="#7082ec"/>
<rect x="3.75" y="-40" width="18.75" height="302" fill="#6b6b6b"/>
<rect x="22.5" y="-40" width="7.5" height="302" fill="#f2f2f2"/>
<line x1="48.125" y1="1.8326" x2="48.125" y2="262" stroke="#6b6b6b" stroke-width="8.75" stroke-dasharray="14.472 5.628"/>
<line x1="43.75" y1="1.8326" x2="43.75" y2="262" stroke="#6f86d8" stroke-width="0.9" stroke-dasharray="14.472 5.628"/>
<line x1="64.375" y1="1.8326" x2="64.375" y2="262" stroke="#6b6b6b" stroke-width="8.75" stroke-dasharray="14.472 5.628"/>
<line x1="60" y1="1.8326" x2="60" y2="262" stroke="#6f86d8" stroke-width="0.9" stroke-dasharray="14.472 5.628"/>
<rect x="82.5" y="-40" width="17.5" height="302" fill="#6b6b6b"/>
<line x1="116.875" y1="1.8326" x2="116.875" y2="262" stroke="#6b6b6b" stroke-width="8.75" stroke-dasharray="14.472 5.628"/>
<line x1="112.5" y1="1.8326" x2="112.5" y2="262" stroke="#6f86d8" stroke-width="0.9" stroke-dasharray="14.472 5.628"/>
<line x1="135.625" y1="1.8326" x2="135.625" y2="262" stroke="#6b6b6b" stroke-width="8.75" stroke-dasharray="14.472 5.628"/>
<line x1="131.25" y1="1.8326" x2="131.25" y2="262" stroke="#6f86d8" stroke-width="0.9" stroke-dasharray="14.472 5.628"/>
<rect x="170" y="-40" width="6.25" height="302" fill="#f2f2f2"/>
<rect x="177.5" y="-40" width="17.5" height="302" fill="#6b6b6b"/>
<line x1="210.625" y1="1.8326" x2="210.625" y2="262" stroke="#6b6b6b" stroke-width="8.75" stroke-dasharray="14.472 5.628"/>
<line x1="206.25" y1="1.8326" x2="206.25" y2="262" stroke="#6f86d8" stroke-width="0.9" stroke-dasharray="14.472 5.628"/>
<line x1="229.375" y1="1.8326" x2="229.375" y2="262" stroke="#6b6b6b" stroke-width="8.75" stroke-dasharray="14.472 5.628"/>
<line x1="225" y1="1.8326" x2="225" y2="262" stroke="#6f86d8" stroke-width="0.9" stroke-dasharray="14.472 5.628"/>
<rect x="245" y="-40" width="18.75" height="302" fill="#6b6b6b"/>
<line x1="282.375" y1="1.8326" x2="282.375" y2="262" stroke="#6b6b6b" stroke-width="8.75" stroke-dasharray="14.472 5.628"/>
<line x1="278" y1="1.8326" x2="278" y2="262" stroke="#6f86d8" stroke-width="0.9" stroke-dasharray="14.472 5.628"/>
<line x1="299.375" y1="1.8326" x2="299.375" y2="262" stroke="#6b6b6b" stroke-width="8.75" stroke-dasharray="14.472 5.628"/>
<line x1="295" y1="1.8326" x2="295" y2="262" stroke="#6f86d8" stroke-width="0.9" stroke-dasharray="14.472 5.628"/>
<path d="M-30 -0.7H347.5 M-30 19.4H347.5 M-30 39.5H347.5 M-30 59.6H347.5 M-30 79.7H347.5 M-30 99.8H347.5 M-30 119.9H347.5 M-30 140H347.5 M-30 160.1H347.5 M-30 180.2H347.5 M-30 200.3H347.5 M-30 220.4H347.5 M-30 240.5H347.5" stroke="#c4aca4" stroke-width="0.8" fill="none"/>
<line x1="14.025" y1="10.8" x2="14.025" y2="262" stroke="#e38b1c" stroke-width="26.55" stroke-dasharray="5.6 14.5" opacity="0.32"/>
<line x1="14.025" y1="10.8" x2="14.025" y2="262" stroke="#e38b1c" stroke-width="26.55" stroke-dasharray="1.1 19" opacity="0.95"/>
<line x1="14.025" y1="14.8" x2="14.025" y2="262" stroke="#e38b1c" stroke-width="26.55" stroke-dasharray="1.3 18.8" opacity="0.95"/>
<line x1="14.025" y1="16.5" x2="14.025" y2="262" stroke="#767676" stroke-width="26.55" stroke-dasharray="2 18.1" opacity="1"/>
<line x1="14.025" y1="18.6" x2="14.025" y2="262" stroke="#d2d2d2" stroke-width="26.55" stroke-dasharray="0.9 19.2" opacity="1"/>
<line x1="92.15" y1="10.8" x2="92.15" y2="262" stroke="#e38b1c" stroke-width="25.3" stroke-dasharray="5.6 14.5" opacity="0.32"/>
<line x1="92.15" y1="10.8" x2="92.15" y2="262" stroke="#e38b1c" stroke-width="25.3" stroke-dasharray="1.1 19" opacity="0.95"/>
<line x1="92.15" y1="14.8" x2="92.15" y2="262" stroke="#e38b1c" stroke-width="25.3" stroke-dasharray="1.3 18.8" opacity="0.95"/>
<line x1="92.15" y1="16.5" x2="92.15" y2="262" stroke="#767676" stroke-width="25.3" stroke-dasharray="2 18.1" opacity="1"/>
<line x1="92.15" y1="18.6" x2="92.15" y2="262" stroke="#d2d2d2" stroke-width="25.3" stroke-dasharray="0.9 19.2" opacity="1"/>
<line x1="158.75" y1="10.8" x2="158.75" y2="262" stroke="#e38b1c" stroke-width="20" stroke-dasharray="5.6 14.5" opacity="0.32"/>
<line x1="158.75" y1="10.8" x2="158.75" y2="262" stroke="#e38b1c" stroke-width="20" stroke-dasharray="1.1 19" opacity="0.95"/>
<line x1="158.75" y1="14.8" x2="158.75" y2="262" stroke="#e38b1c" stroke-width="20" stroke-dasharray="1.3 18.8" opacity="0.95"/>
<line x1="158.75" y1="16.5" x2="158.75" y2="262" stroke="#767676" stroke-width="20" stroke-dasharray="2 18.1" opacity="1"/>
<line x1="158.75" y1="18.6" x2="158.75" y2="262" stroke="#d2d2d2" stroke-width="20" stroke-dasharray="0.9 19.2" opacity="1"/>
<line x1="187.15" y1="10.8" x2="187.15" y2="262" stroke="#e38b1c" stroke-width="25.3" stroke-dasharray="5.6 14.5" opacity="0.32"/>
<line x1="187.15" y1="10.8" x2="187.15" y2="262" stroke="#e38b1c" stroke-width="25.3" stroke-dasharray="1.1 19" opacity="0.95"/>
<line x1="187.15" y1="14.8" x2="187.15" y2="262" stroke="#e38b1c" stroke-width="25.3" stroke-dasharray="1.3 18.8" opacity="0.95"/>
<line x1="187.15" y1="16.5" x2="187.15" y2="262" stroke="#767676" stroke-width="25.3" stroke-dasharray="2 18.1" opacity="1"/>
<line x1="187.15" y1="18.6" x2="187.15" y2="262" stroke="#d2d2d2" stroke-width="25.3" stroke-dasharray="0.9 19.2" opacity="1"/>
<line x1="255.275" y1="10.8" x2="255.275" y2="262" stroke="#e38b1c" stroke-width="26.55" stroke-dasharray="5.6 14.5" opacity="0.32"/>
<line x1="255.275" y1="10.8" x2="255.275" y2="262" stroke="#e38b1c" stroke-width="26.55" stroke-dasharray="1.1 19" opacity="0.95"/>
<line x1="255.275" y1="14.8" x2="255.275" y2="262" stroke="#e38b1c" stroke-width="26.55" stroke-dasharray="1.3 18.8" opacity="0.95"/>
<line x1="255.275" y1="16.5" x2="255.275" y2="262" stroke="#767676" stroke-width="26.55" stroke-dasharray="2 18.1" opacity="1"/>
<line x1="255.275" y1="18.6" x2="255.275" y2="262" stroke="#d2d2d2" stroke-width="26.55" stroke-dasharray="0.9 19.2" opacity="1"/>
</g></g>
<polygon points="522.5,1261 840,1240 840,1278 522.5,1304" fill="#fdd9cf" />
<polygon points="602.5,1262.7 621,1261.5 621,1283.5 602.5,1284.7" fill="#33b2d6" />
<polygon points="602.5,1262.7 621,1261.5 621,1271.4 602.5,1272.6" fill="#4cc6e6" />
<polygon points="635,1258.6 659,1257 659,1279 635,1280.6" fill="#33b2d6" />
<polygon points="635,1258.6 659,1257 659,1266.9 635,1268.5" fill="#4cc6e6" />
<polygon points="672.5,1253.1 715,1250.3 715,1271.3 672.5,1274.1" fill="#33b2d6" />
<polygon points="672.5,1253.1 715,1250.3 715,1259.7 672.5,1262.5" fill="#4cc6e6" />
<polygon points="728.8,1246.4 736,1245.9 736,1265.9 728.8,1266.4" fill="#33b2d6" />
<polygon points="728.8,1246.4 736,1245.9 736,1254.9 728.8,1255.4" fill="#4cc6e6" />
<polygon points="527.5,1290.6 550,1288.7 550,1298.7 527.5,1300.6" fill="#6b6b6b" />
<polygon points="563.8,1286.6 587.5,1284.7 587.5,1295.7 563.8,1297.6" fill="#6b6b6b" />
<polygon points="602.5,1284.4 621,1282.9 621,1292.9 602.5,1294.4" fill="#6b6b6b" />
<polygon points="635,1281.8 659,1279.8 659,1289.8 635,1291.8" fill="#6b6b6b" />
<polygon points="673.8,1277.6 715,1274.2 715,1285.2 673.8,1288.6" fill="#6b6b6b" />
<polygon points="728.8,1272.1 755,1270 755,1282 728.8,1284.1" fill="#6b6b6b" />
<polygon points="798.8,1267.4 823.8,1265.3 823.8,1276.3 798.8,1278.4" fill="#6b6b6b" />
<polygon points="767.5,1241.9 786.2,1240.4 786.2,1270.4 767.5,1271.9" fill="#6b6b6b" />
<polygon points="566.2,1263.1 575,1262.5 575,1275.5 566.2,1276.1" fill="#6b6b6b" />
<polygon points="582.5,1262 591.2,1261.5 591.2,1274.5 582.5,1275" fill="#6b6b6b" />
<clipPath id="c15"><polygon points="840,1059 864,1060 864,1236 840,1240"/></clipPath>
<g clip-path="url(#c15)"><g transform="matrix(1 0.04167 0 1 840 1059)">
<rect x="-30" y="-40" width="84" height="301" fill="#fdd9cf"/>
<rect x="0" y="-40" width="5" height="301" fill="#f2f2f2"/>
<rect x="5" y="-40" width="13.75" height="301" fill="#6b6b6b"/>
<rect x="18.75" y="-40" width="5" height="301" fill="#7082ec"/>
<path d="M-30 -0.7H54 M-30 19.4H54 M-30 39.5H54 M-30 59.6H54 M-30 79.7H54 M-30 99.8H54 M-30 119.9H54 M-30 140H54 M-30 160.1H54 M-30 180.2H54 M-30 200.3H54 M-30 220.4H54" stroke="#c4aca4" stroke-width="0.8" fill="none"/>
<line x1="11.875" y1="10.8" x2="11.875" y2="261" stroke="#e38b1c" stroke-width="13.75" stroke-dasharray="5.6 14.5" opacity="0.32"/>
<line x1="11.875" y1="10.8" x2="11.875" y2="261" stroke="#e38b1c" stroke-width="13.75" stroke-dasharray="1.1 19" opacity="0.95"/>
<line x1="11.875" y1="14.8" x2="11.875" y2="261" stroke="#e38b1c" stroke-width="13.75" stroke-dasharray="1.3 18.8" opacity="0.95"/>
<line x1="11.875" y1="16.5" x2="11.875" y2="261" stroke="#767676" stroke-width="13.75" stroke-dasharray="2 18.1" opacity="1"/>
<line x1="11.875" y1="18.6" x2="11.875" y2="261" stroke="#d2d2d2" stroke-width="13.75" stroke-dasharray="0.9 19.2" opacity="1"/>
</g></g>
<path d="M858 1070L874 1078V1086L858 1078zM858 1090.1L874 1098.1V1106.1L858 1098.1zM858 1110.2L874 1118.2V1126.2L858 1118.2zM858 1130.3L874 1138.3V1146.3L858 1138.3zM858 1150.4L874 1158.4V1166.4L858 1158.4zM858 1170.5L874 1178.5V1186.5L858 1178.5zM858 1190.6L874 1198.6V1206.6L858 1198.6zM858 1210.7L874 1218.7V1226.7L858 1218.7zM858 1230.8L874 1238.8V1246.8L858 1238.8z" fill="#6b6b6b"/>
<path d="M860 1066L875 1074V1079L860 1071zM860 1086.1L875 1094.1V1099.1L860 1091.1zM860 1106.2L875 1114.2V1119.2L860 1111.2zM860 1126.3L875 1134.3V1139.3L860 1131.3zM860 1146.4L875 1154.4V1159.4L860 1151.4zM860 1166.5L875 1174.5V1179.5L860 1171.5zM860 1186.6L875 1194.6V1199.6L860 1191.6zM860 1206.7L875 1214.7V1219.7L860 1211.7zM860 1226.8L875 1234.8V1239.8L860 1231.8z" fill="#e38b1c"/>
<polygon points="840,1240 862.5,1236 862.5,1276 840,1278" fill="#fdd9cf" />
<polygon points="838.8,1246.5 856,1244.5 856,1263 838.8,1265" fill="#33b2d6" />
<polygon points="838.8,1246.5 856,1244.5 856,1252 838.8,1254" fill="#4cc6e6" />
<polygon points="862.5,1234 932.7,1218 932.7,1267 875,1275 862.5,1276" fill="#fdd9cf" />
<polygon points="889.7,1252 898.6,1250.5 898.6,1265 889.7,1266.5" fill="#6b6b6b" />
<polygon points="916,1249.5 927,1248 927,1262 916,1263.5" fill="#6b6b6b" />
<polygon points="514,1044 537.5,1035 625,1025 717.5,1021 760,1019 837.5,1015 845,1027.5 862.5,1052.5 861,1060 840,1059 522.5,1080 515,1065" fill="#6b6b6b" stroke="#e8cfc8" stroke-width="1"/>
<polyline points="516,1058 850,1036" fill="none" stroke="#f0d2c8" stroke-width="1.4" />
<polyline points="524,1066 842,1045" fill="none" stroke="#e8cfc8" stroke-width="1" />
<polyline points="585,1035 600,1048 660,1044 650,1030" fill="none" stroke="#e2e2e2" stroke-width="0.9" />
<polyline points="655,1032 665,1046 700,1043 690,1029" fill="none" stroke="#e2e2e2" stroke-width="0.9" />
<polyline points="745,1024 757,1040" fill="none" stroke="#e2e2e2" stroke-width="0.9" />
<polygon points="371,1206.4 371,1248 412,1328.4 412,1288" fill="#8e8e8e" />
<polygon points="372.5,1207.5 405,1205 431,1265 494,1262.5 505,1280 512,1285 412.5,1287.5" fill="#6b6b6b" />
<polyline points="371.5,1206.5 405,1204.5" fill="none" stroke="#e6e6e6" stroke-width="1.2" />
<polyline points="371.5,1206.5 412.5,1288 512,1285" fill="none" stroke="#e6e6e6" stroke-width="1.2" />
<polygon points="406,1181 435,1180 435,1169 457.5,1167.5 460,1177.5 497.5,1177.5 510,1210 510,1225 492.5,1226 430,1229" fill="#6b6b6b" />
<polygon points="405.5,1184 430.8,1231.6 430.8,1266 405.5,1218.5" fill="#5f7fd0" />
<polygon points="412,1212 424,1236 424,1253 412,1230" fill="#2f8ea8" />
<polygon points="430,1229 492.5,1226 492.5,1262.5 432.5,1265.5" fill="#35a0ba" />
<polygon points="430,1229 492.5,1226 492.5,1243 431,1247" fill="#7fd4ec" />
<polygon points="432,1229 437,1228.7 438,1265 433,1265.3" fill="#5f8fe8" />
<polygon points="481,1226.5 486,1226.2 486,1262.8 481,1263" fill="#5f8fe8" />
<polygon points="444,1238 455,1237.5 455,1250 444,1250.5" fill="#3aa8c8" />
<polygon points="493,1230 513.7,1268 524,1262 524,1307 513.7,1308 505,1282 493,1262" fill="#fdd9cf" />
<polygon points="412.5,1288 513,1285 513,1308 481.3,1308.6" fill="#6b6b6b" />
<polygon points="412,1288 481.3,1308 513.2,1307.5 513.2,1312.4 412,1317.4" fill="#f2f2f2" />
<polygon points="412,1317.4 513.2,1312.4 513.2,1321.8 412,1328.4" fill="#a8a8a8" />
<polygon points="523.8,1306 860,1277.4 1100,1258 1300,1243.8 1400,1237 1705,1215 1705,1255 1300,1283.8 523.8,1343.8" fill="#a8a8a8" />
<polygon points="523.8,1306 860,1277.4 1100,1258 1300,1243.8 1400,1237 1705,1215 1705,1242.5 1300,1272.5 523.8,1332.5" fill="#f2f2f2" />
<polygon points="513.7,1307.5 524.7,1306 524.7,1344.8 513.7,1321.8" fill="#9a9a9a" />
<path d="M283 612h1.300M287.4 612h1.300M291.8 612h1.300M296.2 612h1.300M300.6 612h1.300M262 630h1.300M266.4 630h1.300M270.8 630h1.300M275.2 630h1.300M297 614h1.300M301.4 613.8h1.300M305.8 613.6h1.300M310.2 613.4h1.300M285 636h1.300M289.4 636h1.300M293.8 636h1.300M275 650h1.300M278.5 654h1.300M282 658h1.300M300 660h1.300M304.4 660h1.300M308.8 660h1.300M313.2 660h1.300M290 680h1.300M294 683h1.300M298 686h1.300M308 700h1.300M312 704h1.300M316 708h1.300M322 727h1.300M326 731h1.300M548 549h1.300M552.4 549h1.300M556.8 549h1.300M561.2 549h1.300M556 563h1.300M560.4 563h1.300M564.8 563h1.300M548 575h1.300M552.4 575h1.300M556.8 575h1.300M561.2 575h1.300M580 598h1.300M584.4 598h1.300M551 588h1.300M555.4 588h1.300M559.8 588h1.300M597 563h1.300M601.4 563h1.300M605.8 563h1.300M600 581h1.300M604.4 581h1.300M608.8 581h1.300M613.2 581h1.300M1725 1224h1.300M1729.4 1224h1.300M1733.8 1224h1.300M1738.2 1224h1.300M1745 1224h1.300M1749.4 1224h1.300M1753.8 1224h1.300M1758.2 1224h1.300M1762.6 1224h1.300M1775 1222h1.300M1779.4 1222h1.300M1783.8 1222h1.300M1780 1200h1.300M1782 1206h1.300M262 1128h1.300M266.4 1128h1.300M270.8 1128h1.300M270 1018h1.300M274.4 1018h1.300M278.8 1018h1.300" stroke="#8c7a33" stroke-width="1.300" fill="none" opacity="0.800"/>
<g font-family="Liberation Sans,sans-serif" font-size="22">
<text x="140.500" y="1392" fill="#0a0aff">Z</text>
<text x="196" y="1441" fill="#ff1a1a">X</text>
<text x="128" y="1422" fill="#1aff1a" font-size="17">Y</text>
</g>
<circle cx="136.500" cy="1425" r="5.500" fill="#16d416"/>
<polygon points="143,1432 143,1412 139.5,1412 147,1396 154.5,1412 151,1412 151,1432" fill="#0a0aff" />
<polygon points="152,1431.5 174,1430 174,1426 192,1433 174,1441.5 174,1437.5 152,1438.5" fill="#ff1010" />
<rect x="142" y="1432" width="11" height="11" fill="#d8d8d8"/>
</svg>
<div style="position:absolute;left:0px;top:0px;width:2017px;height:76px;background:#2f2f2f;"></div>
<div style="position:absolute;left:537.5px;top:13.6px;font-size:19.4px;line-height:19.4px;color:#a9a9a9;font-weight:400;white-space:nowrap;transform:scaleX(0.9796);transform-origin:0 0;">Cubicost TAS C-VI (Professional) - [C:\Users\Admin\Desktop\Eshan\Cubicost\TAS\P5. Parklane\Parklane 2.TAS]</div>
<div style="position:absolute;left:0px;top:76px;width:2017px;height:1px;background:#454545;"></div>
<div style="position:absolute;left:52px;top:47px;width:120px;height:28px;background:#3a97f6;border-radius:14px;"></div>
<div style="position:absolute;left:0.0px;top:51.7px;font-size:19.8px;line-height:19.8px;color:#e6e6e6;font-weight:400;white-space:nowrap;transform:scaleX(0.8568);transform-origin:0 0;">DEL</div>
<div style="position:absolute;left:71.0px;top:51.7px;font-size:19.8px;line-height:19.8px;color:#e8f2ff;font-weight:400;white-space:nowrap;transform:scaleX(0.9091);transform-origin:0 0;">IDENTIFY</div>
<div style="position:absolute;left:190.0px;top:51.7px;font-size:19.8px;line-height:19.8px;color:#e6e6e6;font-weight:400;white-space:nowrap;transform:scaleX(0.9539);transform-origin:0 0;">DRAW</div>
<div style="position:absolute;left:284.0px;top:51.7px;font-size:19.8px;line-height:19.8px;color:#e6e6e6;font-weight:400;white-space:nowrap;transform:scaleX(0.9091);transform-origin:0 0;">VIEW</div>
<div style="position:absolute;left:366.5px;top:51.7px;font-size:19.8px;line-height:19.8px;color:#e6e6e6;font-weight:400;white-space:nowrap;transform:scaleX(0.9091);transform-origin:0 0;">QUANTITY</div>
<div style="position:absolute;left:494.5px;top:51.7px;font-size:19.8px;line-height:19.8px;color:#e6e6e6;font-weight:400;white-space:nowrap;transform:scaleX(0.9195);transform-origin:0 0;">REVISION</div>
<div style="position:absolute;left:1875px;top:47px;width:150px;height:26px;background:#454747;border:1px solid #6a6a6a;border-radius:4px;box-sizing:border-box;"></div>
<div style="position:absolute;left:1881.0px;top:49.5px;font-size:21px;line-height:21px;color:#c9c9c9;font-weight:400;white-space:nowrap;transform:scaleX(0.9066);transform-origin:0 0;">Tell me (Ctrl+Alt+</div>
<div style="position:absolute;left:0px;top:77px;width:2017px;height:156px;background:#2b2b2b;"></div>
<div style="position:absolute;left:0px;top:233px;width:2017px;height:3px;background:#242424;"></div>
<div style="position:absolute;left:0px;top:236px;width:2017px;height:50px;background:#444444;"></div>
<div style="position:absolute;left:314px;top:84px;width:1px;height:143px;background:#3c3c3c;"></div>
<div style="position:absolute;left:956px;top:84px;width:1px;height:143px;background:#3c3c3c;"></div>
<div style="position:absolute;left:1339px;top:84px;width:1px;height:143px;background:#3c3c3c;"></div>
<div style="position:absolute;left:1598px;top:84px;width:1px;height:143px;background:#3c3c3c;"></div>
<div style="position:absolute;left:29.0px;top:92.4px;font-size:20px;line-height:20px;color:#e4e4e4;font-weight:400;white-space:nowrap;transform:scaleX(0.9233);transform-origin:0 0;">Extend</div>
<div style="position:absolute;left:29.0px;top:129.9px;font-size:20px;line-height:20px;color:#e4e4e4;font-weight:400;white-space:nowrap;transform:scaleX(0.9683);transform-origin:0 0;">Trim</div>
<div style="position:absolute;left:25.5px;top:167.3px;font-size:20px;line-height:20px;color:#e4e4e4;font-weight:400;white-space:nowrap;transform:scaleX(0.9417);transform-origin:0 0;">Rotate</div>
<div style="position:absolute;left:128.5px;top:92.4px;font-size:20px;line-height:20px;color:#e4e4e4;font-weight:400;white-space:nowrap;transform:scaleX(0.9569);transform-origin:0 0;">Break</div>
<div style="position:absolute;left:128.5px;top:129.9px;font-size:20px;line-height:20px;color:#e4e4e4;font-weight:400;white-space:nowrap;transform:scaleX(0.9172);transform-origin:0 0;">Merge</div>
<div style="position:absolute;left:130.0px;top:167.3px;font-size:20px;line-height:20px;color:#e4e4e4;font-weight:400;white-space:nowrap;transform:scaleX(0.9193);transform-origin:0 0;">Mirror</div>
<div style="position:absolute;left:226.5px;top:92.4px;font-size:20px;line-height:20px;color:#e4e4e4;font-weight:400;white-space:nowrap;transform:scaleX(0.9330);transform-origin:0 0;">Align</div>
<div style="position:absolute;left:227.0px;top:129.9px;font-size:20px;line-height:20px;color:#8a8a8a;font-weight:400;white-space:nowrap;transform:scaleX(0.9637);transform-origin:0 0;">Split</div>
<div style="position:absolute;left:227.0px;top:167.3px;font-size:20px;line-height:20px;color:#8a8a8a;font-weight:400;white-space:nowrap;transform:scaleX(0.9696);transform-origin:0 0;">Enclose</div>
<div style="position:absolute;left:92.5px;top:202.6px;font-size:20px;line-height:20px;color:#d8d8d8;font-weight:400;white-space:nowrap;transform:scaleX(0.8911);transform-origin:0 0;">Modify</div>
<div style="position:absolute;left:154px;top:210px;border:6px solid transparent;border-top:7px solid #d0d0d0;border-bottom:0"></div>
<div style="position:absolute;left:326.5px;top:84.5px;width:92px;height:110px;background:#3d3d3d;border-radius:4px;"></div>
<div style="position:absolute;left:326.5px;top:84.5px;width:92px;height:66px;background:#434343;border-radius:4px 4px 0 0;"></div>
<div style="position:absolute;left:337.0px;top:147.1px;font-size:20px;line-height:20px;color:#d8d8d8;font-weight:400;white-space:nowrap;transform:scaleX(0.9813);transform-origin:0 0;">Drawing</div>
<div style="position:absolute;left:330.8px;top:170.6px;font-size:20px;line-height:20px;color:#d8d8d8;font-weight:400;white-space:nowrap;transform:scaleX(0.9437);transform-origin:0 0;">Manager</div>
<div style="position:absolute;left:409px;top:178px;border:4.5px solid transparent;border-top:5px solid #d0d0d0;border-bottom:0"></div>
<div style="position:absolute;left:421.5px;top:85px;width:179px;height:32px;background:#3c3c3c;border-radius:4px;"></div>
<div style="position:absolute;left:421.5px;top:85px;width:162px;height:32px;background:#484848;border-radius:4px 0 0 4px;"></div>
<div style="position:absolute;left:454.5px;top:92.4px;font-size:20px;line-height:20px;color:#e4e4e4;font-weight:400;white-space:nowrap;transform:scaleX(0.9402);transform-origin:0 0;">Layer Manager</div>
<div style="position:absolute;left:454.5px;top:129.9px;font-size:20px;line-height:20px;color:#e4e4e4;font-weight:400;white-space:nowrap;transform:scaleX(0.9463);transform-origin:0 0;">Locate Picture</div>
<div style="position:absolute;left:454.5px;top:167.3px;font-size:20px;line-height:20px;color:#8a8a8a;font-weight:400;white-space:nowrap;transform:scaleX(0.9563);transform-origin:0 0;">Relocate</div>
<div style="position:absolute;left:589px;top:97.5px;border:4.5px solid transparent;border-top:5px solid #d0d0d0;border-bottom:0"></div>
<div style="position:absolute;left:584.5px;top:135px;border:4.5px solid transparent;border-top:5px solid #d0d0d0;border-bottom:0"></div>
<div style="position:absolute;left:640.0px;top:92.4px;font-size:20px;line-height:20px;color:#8a8a8a;font-weight:400;white-space:nowrap;transform:scaleX(0.9615);transform-origin:0 0;">Scale Drawing</div>
<div style="position:absolute;left:640.0px;top:129.9px;font-size:20px;line-height:20px;color:#8a8a8a;font-weight:400;white-space:nowrap;transform:scaleX(0.9631);transform-origin:0 0;">Split Drawing</div>
<div style="position:absolute;left:636.5px;top:167.3px;font-size:20px;line-height:20px;color:#e4e4e4;font-weight:400;white-space:nowrap;transform:scaleX(0.9744);transform-origin:0 0;">Hide Drawing</div>
<div style="position:absolute;left:805.5px;top:92.4px;font-size:20px;line-height:20px;color:#8a8a8a;font-weight:400;white-space:nowrap;transform:scaleX(0.9493);transform-origin:0 0;">Batch Replace</div>
<div style="position:absolute;left:808.5px;top:129.9px;font-size:20px;line-height:20px;color:#8a8a8a;font-weight:400;white-space:nowrap;transform:scaleX(0.9431);transform-origin:0 0;">Draw CAD Line</div>
<div style="position:absolute;left:565.5px;top:201.6px;font-size:20px;line-height:20px;color:#d8d8d8;font-weight:400;white-space:nowrap;transform:scaleX(0.9523);transform-origin:0 0;">Manage Drawing</div>
<div style="position:absolute;left:1001.5px;top:92.4px;font-size:20px;line-height:20px;color:#8a8a8a;font-weight:400;white-space:nowrap;transform:scaleX(0.9414);transform-origin:0 0;">Restore Picked CAD Entity</div>
<div style="position:absolute;left:1001.5px;top:129.9px;font-size:20px;line-height:20px;color:#8a8a8a;font-weight:400;white-space:nowrap;transform:scaleX(0.9165);transform-origin:0 0;">Identify Text</div>
<div style="position:absolute;left:999.5px;top:167.3px;font-size:20px;line-height:20px;color:#e4e4e4;font-weight:400;white-space:nowrap;transform:scaleX(0.9582);transform-origin:0 0;">Identification Options</div>
<div style="position:absolute;left:1247.5px;top:146.6px;font-size:20px;line-height:20px;color:#8a8a8a;font-weight:400;white-space:nowrap;transform:scaleX(0.9812);transform-origin:0 0;">Element</div>
<div style="position:absolute;left:1242.0px;top:170.1px;font-size:20px;line-height:20px;color:#8a8a8a;font-weight:400;white-space:nowrap;transform:scaleX(0.9591);transform-origin:0 0;">Schedule</div>
<div style="position:absolute;left:1120.0px;top:201.6px;font-size:20px;line-height:20px;color:#d8d8d8;font-weight:400;white-space:nowrap;transform:scaleX(0.9148);transform-origin:0 0;">Identify</div>
<div style="position:absolute;left:1364.5px;top:146.6px;font-size:20px;line-height:20px;color:#8a8a8a;font-weight:400;white-space:nowrap;transform:scaleX(0.9528);transform-origin:0 0;">Pick</div>
<div style="position:absolute;left:1364.0px;top:170.1px;font-size:20px;line-height:20px;color:#8a8a8a;font-weight:400;white-space:nowrap;transform:scaleX(0.8998);transform-origin:0 0;">Axis</div>
<div style="position:absolute;left:1430.5px;top:146.6px;font-size:20px;line-height:20px;color:#8a8a8a;font-weight:400;white-space:nowrap;transform:scaleX(0.9528);transform-origin:0 0;">Pick</div>
<div style="position:absolute;left:1424.5px;top:170.1px;font-size:20px;line-height:20px;color:#8a8a8a;font-weight:400;white-space:nowrap;transform:scaleX(0.9603);transform-origin:0 0;">Label</div>
<div style="position:absolute;left:1484.0px;top:146.6px;font-size:20px;line-height:20px;color:#8a8a8a;font-weight:400;white-space:nowrap;transform:scaleX(0.9261);transform-origin:0 0;">Auto-Identify</div>
<div style="position:absolute;left:1529px;top:176px;border:4.5px solid transparent;border-top:5px solid #8a8a8a;border-bottom:0"></div>
<div style="position:absolute;left:1433.5px;top:201.6px;font-size:20px;line-height:20px;color:#d8d8d8;font-weight:400;white-space:nowrap;transform:scaleX(0.9244);transform-origin:0 0;">Axis Grid</div>
<div style="position:absolute;left:-10px;top:243px;width:42px;height:34px;background:#2a2b2d;border-radius:5px;"></div>
<div style="position:absolute;left:15px;top:257.5px;border:4.5px solid transparent;border-top:5px solid #c8c8c8;border-bottom:0"></div>
<div style="position:absolute;left:57px;top:243px;width:154px;height:34px;background:#2a2b2d;border-radius:5px;"></div>
<div style="position:absolute;left:62.6px;top:250.4px;font-size:20px;line-height:20px;color:#7d7d7d;font-weight:400;white-space:nowrap;transform:scaleX(0.9219);transform-origin:0 0;">Axis Grid</div>
<div style="position:absolute;left:194px;top:257.5px;border:4.5px solid transparent;border-top:5px solid #c8c8c8;border-bottom:0"></div>
<div style="position:absolute;left:236px;top:243px;width:155px;height:34px;background:#2a2b2d;border-radius:5px;"></div>
<div style="position:absolute;left:241.6px;top:250.4px;font-size:20px;line-height:20px;color:#7d7d7d;font-weight:400;white-space:nowrap;transform:scaleX(0.8933);transform-origin:0 0;">Ort-1</div>
<div style="position:absolute;left:374px;top:257.5px;border:4.5px solid transparent;border-top:5px solid #c8c8c8;border-bottom:0"></div>
<svg style="position:absolute;left:0;top:0" width="2017" height="240" viewBox="0 0 2017 240" fill="none" stroke-linecap="butt">
<path d="M0 99h4" stroke="#8a8a8a" stroke-width="1.5"/><path d="M5 99h14" stroke="#3a9bf5" stroke-width="1.5" stroke-dasharray="3 2"/><path d="M14.500 111L24 92" stroke="#3a9bf5" stroke-width="1.600"/>
<path d="M0 138h4" stroke="#8a8a8a" stroke-width="1.500"/><path d="M2 148.500L11 130" stroke="#3a9bf5" stroke-width="1.600"/><path d="M10 138h14" stroke="#3a9bf5" stroke-width="1.500" stroke-dasharray="3 2"/>
<path d="M12 169.500A8.500 8.500 0 1 0 18 174" stroke="#3a9bf5" stroke-width="1.700"/><path d="M11 165.500l6.500 4-6.500 4z" fill="#f0931e"/>
<g stroke="#f0931e" stroke-width="1.600" fill="#f0931e"><path d="M104 96h5.500M115 96h5.500"/><path d="M100.200 96l4.300-3.200v6.400zM124.300 96l-4.300-3.200v6.400z" stroke="none"/></g>
<g stroke="#3a9bf5" stroke-width="1.300" fill="#4f7db0"><rect x="100.600" y="103.600" width="10" height="8"/><rect x="113.600" y="103.600" width="10" height="8"/></g>
<g stroke="#f0931e" stroke-width="1.600" fill="#f0931e"><path d="M100 133.500h6M118.500 133.500h6"/><path d="M110 133.500l-4.300-3.200v6.400zM114.500 133.500l4.300-3.200v6.400z" stroke="none"/></g>
<g stroke="#3a9bf5" stroke-width="1.300" fill="#4f7db0"><rect x="100.600" y="140.600" width="23" height="8"/><path d="M110.500 140.600v8"/></g>
<path d="M102 187.500L111 168v19.500z" fill="#3a9bf5"/><path d="M115.500 168l9.500 19.500h-9.500z" fill="#f0931e"/><path d="M113.300 163.500v25.500" stroke="#3a9bf5" stroke-width="1.400"/>
<rect x="206.500" y="92.600" width="11.500" height="6.500" stroke="#3a9bf5" stroke-width="1.400"/><rect x="199.500" y="103.600" width="18.500" height="8" stroke="#f0931e" stroke-width="1.400"/><path d="M221.300 89v24.500" stroke="#3a9bf5" stroke-width="1.600"/>
<path d="M201 148.500l19-17.500 1.500 2-9 11.500z" fill="#8a8a8a" opacity="0.750"/><path d="M213 137l7.500-7" stroke="#8a8a8a" stroke-width="2.200"/>
<rect x="199.600" y="171.600" width="20" height="15.500" rx="1" stroke="#8a8a8a" stroke-width="1.400"/><circle cx="219" cy="171.500" r="2.600" fill="#2b2b2b" stroke="#8a8a8a" stroke-width="1.300"/>
<path d="M365 92.500h15l9.500 8v15" stroke="#3a9bf5" stroke-width="1.500"/>
<path d="M360.500 96.500h16.500l8 7v12h-24.500z" fill="#c9defa"/><path d="M362.500 102v-3.500h4" stroke="#8e9fb3" stroke-width="1.200"/><path d="M383 108.500v3.500h-3" stroke="#8e9fb3" stroke-width="1.200"/>
<rect x="355.800" y="115.800" width="37" height="11.500" rx="1.200" fill="#40699a" stroke="#3a9bf5" stroke-width="1.500"/>
<g fill="#3a9bf5"><path d="M431 90h14l-4 4.500h-14z"/><path d="M430 96.500h12l-3 4h-12z" opacity="0.850"/><path d="M428 103h8l-2 3.500h-8z" opacity="0.700"/></g><path d="M427 109.500h9" stroke="#7b8894" stroke-width="1.400"/>
<circle cx="441.500" cy="106.500" r="5.500" stroke="#f0931e" stroke-width="3" stroke-dasharray="2.900 1.420"/><circle cx="441.500" cy="106.500" r="4.600" fill="#2b2b2b" stroke="#f0931e" stroke-width="1.800"/><circle cx="441.500" cy="106.500" r="2" fill="#f0931e"/>
<rect x="427.600" y="131.600" width="21.500" height="17.500" stroke="#3a9bf5" stroke-width="1.500"/><path d="M430 147l6.500-7 3.500 3.500 3.500-4.500 4.500 8z" fill="#3a9bf5"/><rect x="442.500" y="134.500" width="3.200" height="3.200" fill="#3a9bf5"/>
<path d="M428.500 127.500l1.200 3.300 3.500.300-2.800 2.100 1 3.400-2.900-2-2.900 2 1-3.400-2.800-2.100 3.500-.300z" fill="#f0931e"/><path d="M430 133l4.500 4.500" stroke="#f0931e" stroke-width="1.300"/>
<g stroke="#777" stroke-width="1.200"><circle cx="437.500" cy="177" r="8.300"/><path d="M437.500 165.500v7M437.500 181.500v7M426 177h7M442 177h7"/></g>
<g stroke="#8a8a8a" stroke-width="1.300"><rect x="612.600" y="94.600" width="22" height="17.500"/><path d="M631 98l-4.500 4.500M626.500 99v3.500h3.500M616 109l4.500-4.500M620.500 108v-3.500h-3.500"/></g>
<g stroke="#8a8a8a" stroke-width="1.300"><rect x="612.600" y="130.600" width="19" height="19.500" rx="1"/><path d="M616 146.500L634 127M611 146.500h22" /><path d="M616 146.500h12" stroke-dasharray="2 1.500"/></g>
<g stroke="#9fa6ab" stroke-width="1.300"><path d="M628 178v-12H611v20.500h9"/><path d="M611 169h17M614 173h9M614 176.500h7M614 180h5"/></g>
<path d="M620 184q6-6 12 0q-6 6-12 0z" fill="#3a9bf5"/><circle cx="626" cy="184" r="2" fill="#1f5fa8"/>
<g stroke="#8a8a8a" stroke-width="1.300"><path d="M780 92h18.500M780 95h18.500M780 98h18.500" stroke-dasharray="1.500 1.500"/><path d="M789 100v5M786 103l3 3 3-3M783 107.500h12.500M780.500 111h17.500M780.500 107.500v3.500M798 107.500v3.500" /></g>
<g stroke="#8a8a8a" stroke-width="1.300"><rect x="782" y="132.600" width="19" height="17.500"/><path d="M779 132.600h3M801 150h3M782 129.500v3M801 150v3M779 150h3M782 150v3"/><path d="M786 146l1.500-4.500 9-9 3 3-9 9z"/></g>
<g stroke="#8a8a8a" stroke-width="1.300"><rect x="975.600" y="95.600" width="18" height="16"/><path d="M972.500 95.600h3M993.600 95.600h3M972.500 111.600h3M993.600 111.600h3M975.600 92.500v3M993.600 92.500v3M975.600 111.600v3M993.600 111.600v3"/><path d="M989 100h-6v8M980 105.500l3 3 3-3"/></g>
<g stroke="#8a8a8a" stroke-width="1.300"><path d="M974.600 127.600h13l6 6v15.500h-19z"/><path d="M987.600 127.600v6h6"/><path d="M978 143l3-8 3 8M979 140.500h4M986 138q4-2 4 2t-4 3M988 144l3 3.500"/></g>
<g stroke="#9fa6ab" stroke-width="1.400"><path d="M971.600 169v-5h5M988 164h5v5M971.600 181v5.500h5"/></g>
<path d="M981 166.500l6.500 3.500v8l-6.500 3.500-6-3.500v-8z" fill="#3a9bf5"/><path d="M981 166.500v15M975 170l12.500 7.500M987.500 170L975 177.500" stroke="#2b2b2b" stroke-width="1"/>
<path d="M988.500 177l4.500 2.500v5l-4.500 2.500-4.500-2.500v-5z" fill="#2b2b2b" stroke="#f0931e" stroke-width="1.500"/><circle cx="988.500" cy="182" r="1.600" stroke="#f0931e" stroke-width="1.100"/>
<g stroke="#858585" stroke-width="1.400"><path d="M1279 90h11l8 8v19"/><path d="M1270 101v21.500h14"/><path d="M1290 90v8h8"/><ellipse cx="1287" cy="108" rx="4.500" ry="2"/><path d="M1282.500 108v7q4.500 3.500 9 0v-7M1282.500 111.500q4.500 3.500 9 0"/><rect x="1290.600" y="117.600" width="11.500" height="10.500" rx="1.500"/><path d="M1290.600 122.800h11.500"/></g>
<rect x="1264.500" y="89" width="15" height="15" fill="#8f8f8f"/><path d="M1268.500 93l7 7M1275.500 93l-7 7" stroke="#2b2b2b" stroke-width="1.400"/>
<path d="M1366 89v34M1372.3 89v34M1378.6 89v34M1384.9 89v34M1391.2 89v34M1363 91.5h34M1363 97.8h34M1363 104.1h34M1363 110.4h34M1363 116.7h34" stroke="#858585" stroke-width="1.300"/>
<path d="M1398 104l3.500 5v9h-7v-9z" fill="#8f8f8f"/><path d="M1398 118v10" stroke="#8f8f8f" stroke-width="2.200"/>
<path d="M1431.5 89v34M1437.8 89v34M1444.1 89v34M1450.4 89v34M1456.7 89v34M1428.5 91.5h34M1428.5 97.8h34M1428.5 104.1h34M1428.5 110.4h34M1428.5 116.7h34" stroke="#858585" stroke-width="1.300"/>
<path d="M1463.5 104l3.500 5v9h-7v-9z" fill="#8f8f8f"/><path d="M1463.5 118v10" stroke="#8f8f8f" stroke-width="2.200"/>
<g fill="#858585"><circle cx="1426.500" cy="91.5" r="1.300"/><circle cx="1426.500" cy="97.8" r="1.300"/><circle cx="1426.500" cy="104.1" r="1.300"/><circle cx="1426.500" cy="110.4" r="1.300"/><circle cx="1426.500" cy="116.7" r="1.300"/></g>
<g stroke="#858585" stroke-width="1.500"><path d="M1519.500 96v-6.500h7M1545 89.500h7v6.500M1519.500 117v6h7M1545 123h7v-6"/><path d="M1519 106.500h34" stroke-width="2.200"/><path d="M1531 98h9M1526.500 98h1.500M1531 115h9M1526.500 115h1.500" /></g>
</svg>
<div style="position:absolute;left:69px;top:1472px;width:1948px;height:44px;background:#333435;"></div>
<div style="position:absolute;left:0px;top:1515px;width:2017px;height:1.5px;background:#454545;"></div>
<div style="position:absolute;left:0px;top:1516.5px;width:2017px;height:40px;background:#2e2f30;"></div>
<div style="position:absolute;left:0px;top:1556px;width:2017px;height:1.5px;background:#454545;"></div>
<div style="position:absolute;left:0px;top:1557.5px;width:2017px;height:52px;background:#323334;"></div>
<div style="position:absolute;left:0px;top:1607px;width:2017px;height:3px;background:#3d3e3f;"></div>
<svg style="position:absolute;left:842px;top:1478px" width="28" height="28" viewBox="0 0 28 28"><g stroke="#d8d8d8" stroke-width="1.5" fill="none"><path d="M24 3L15 12M15 5v7h7"/><path d="M3 25l9-9M5 16h7v7"/></g></svg>
<div style="position:absolute;left:874.0px;top:1482.6px;font-size:20px;line-height:20px;color:#d8d8d8;font-weight:400;white-space:nowrap;transform:scaleX(0.9531);transform-origin:0 0;">Specify first corner point, or select element entities</div>
<div style="position:absolute;left:-1.0px;top:1523.3px;font-size:24.5px;line-height:24.5px;color:#d2d2d2;font-weight:400;white-space:nowrap;transform:scaleX(0.8327);transform-origin:0 0;">eport</div>
<div style="position:absolute;left:71.0px;top:1573.1px;font-size:20px;line-height:20px;color:#d2d2d2;font-weight:400;white-space:nowrap;transform:scaleX(0.9250);transform-origin:0 0;">Selected Entity: 0</div>
<div style="position:absolute;left:231.0px;top:1573.1px;font-size:20px;line-height:20px;color:#d2d2d2;font-weight:400;white-space:nowrap;transform:scaleX(0.9383);transform-origin:0 0;">Hidden Entity: 0</div>
<div style="position:absolute;left:380px;top:1565px;width:37.5px;height:36.5px;background:#2c2d2e;border:1px solid #484848;border-radius:4px;box-sizing:border-box;"></div>
<div style="position:absolute;left:423.5px;top:1565px;width:55px;height:36.5px;background:#26303d;border:1.5px solid #2f7fd6;border-radius:4px;box-sizing:border-box;"></div>
<div style="position:absolute;left:488.5px;top:1565px;width:38px;height:36.5px;background:#26303d;border:1.5px solid #2f7fd6;border-radius:4px;box-sizing:border-box;"></div>
<div style="position:absolute;left:532.5px;top:1565px;width:37.5px;height:36.5px;background:#2c2d2e;border:1px solid #484848;border-radius:4px;box-sizing:border-box;"></div>
<div style="position:absolute;left:576px;top:1565px;width:55px;height:36.5px;background:#2c2d2e;border:1px solid #484848;border-radius:4px;box-sizing:border-box;"></div>
<div style="position:absolute;left:637px;top:1565px;width:236px;height:36.5px;background:#2c2d2e;border:1px solid #484848;border-radius:4px;box-sizing:border-box;"></div>
<svg style="position:absolute;left:380px;top:1565px" width="38" height="37" viewBox="0 0 38 37"><path d="M10 9v18h15M10 19h7" stroke="#d8d8d8" stroke-width="1.6" fill="none"/></svg>
<svg style="position:absolute;left:423px;top:1565px" width="56" height="37" viewBox="0 0 56 37"><rect x="9" y="9" width="20" height="19" stroke="#4a98ee" stroke-width="1.6" fill="none"/><rect x="7" y="7" width="6" height="6" fill="#f0883a"/><path d="M40 17h7l-3.500 4z" fill="#8a8a8a"/></svg>
<svg style="position:absolute;left:488px;top:1565px" width="39" height="37" viewBox="0 0 39 37"><g stroke="#4a98ee" stroke-width="1.5" fill="none"><rect x="16" y="7" width="7" height="7"/><rect x="7" y="22" width="7" height="7"/><rect x="25" y="22" width="7" height="7"/><path d="M19.500 14v4M10.500 22l9-4 9 4"/></g></svg>
<svg style="position:absolute;left:532px;top:1565px" width="38" height="37" viewBox="0 0 38 37"><path d="M8 8l22 21M30 8L8 29" stroke="#e0e0e0" stroke-width="1.6" fill="none"/></svg>
<svg style="position:absolute;left:576px;top:1565px" width="56" height="37" viewBox="0 0 56 37"><path d="M12 7v11M6.500 12.500h11" stroke="#c8c8c8" stroke-width="1.4" fill="none"/><rect x="15" y="23" width="15" height="7" fill="#8fa0ac"/><path d="M40 17h7l-3.500 4z" fill="#8a8a8a"/></svg>
<svg style="position:absolute;left:644px;top:1570px" width="26" height="26" viewBox="0 0 26 26"><rect x="2.500" y="4" width="17" height="13" stroke="#d8d8d8" stroke-width="1.6" fill="none"/><rect x="6" y="7.500" width="10" height="6.500" fill="#d8d8d8"/><path d="M6 21h11M16 15l6 6-3 .5 1.500 3" stroke="#d8d8d8" stroke-width="1.6" fill="none"/></svg>
<div style="position:absolute;left:676.0px;top:1573.1px;font-size:20px;line-height:20px;color:#d8d8d8;font-weight:400;white-space:nowrap;transform:scaleX(0.9720);transform-origin:0 0;">Cross-Element Select</div>
<div style="position:absolute;left:0;top:1610px;width:2017px;height:78.500px;background:linear-gradient(90deg,#1c1c1c 0%,#1e1e1e 70%,#22262b 82%,#252a30 100%)"></div>
<div style="position:absolute;left:0px;top:1609.5px;width:2017px;height:1.5px;background:#434445;"></div>
<div style="position:absolute;left:0;top:1683.500px;width:2017px;height:5px;background:linear-gradient(180deg,#3a3231,#5c504d)"></div>
<div style="position:absolute;left:1760px;top:1683.500px;width:220px;height:5px;background:linear-gradient(90deg,rgba(20,16,16,0) 0%,#1a1414 25%,#7a0606 42%,#8a0404 58%,#151212 72%,rgba(20,16,16,0) 100%)"></div>
<svg style="position:absolute;left:652px;top:1629px" width="37" height="37" viewBox="0 0 37 37"><defs><linearGradient id="wg" x1="0" y1="0" x2="1" y2="1"><stop offset="0" stop-color="#6fdcff"/><stop offset="1" stop-color="#1593ea"/></linearGradient></defs><g fill="url(#wg)"><rect x="0" y="0" width="17.5" height="17.5"/><rect x="19.500" y="0" width="17.500" height="17.500"/><rect x="0" y="19.500" width="17.500" height="17.500"/><rect x="19.500" y="19.500" width="17.500" height="17.500"/></g></svg>
<svg style="position:absolute;left:720px;top:1629px" width="39" height="36" viewBox="0 0 39 36"><rect x="0.500" y="10" width="27" height="24" rx="2" fill="#5b5b5b"/><rect x="10" y="1" width="28" height="24" rx="2" fill="#f0f0f0"/><rect x="10" y="10" width="18" height="15" fill="#b9b9b9"/></svg>
<svg style="position:absolute;left:789px;top:1629px" width="39" height="36" viewBox="0 0 39 36"><path d="M1 3q0-2 2-2h10l3 4H1z" fill="#e8a51c"/><rect x="1" y="5" width="37" height="28" rx="2" fill="#ffd04f"/><path d="M1 20h37v11q0 2-2 2H3q-2 0-2-2z" fill="#f7bf35"/><rect x="8" y="23" width="22" height="10" rx="3" fill="#1787dc"/><rect x="12" y="26" width="14" height="3" rx="1" fill="#0f6cbd"/></svg>
<div style="position:absolute;left:803.5px;top:1672.5px;width:9px;height:3px;background:#8a8a8a;border-radius:2px;"></div>
<svg style="position:absolute;left:857px;top:1627.5px" width="39" height="39" viewBox="0 0 39 39"><defs><linearGradient id="eg" x1="0" y1="0" x2="1" y2="0.300"><stop offset="0" stop-color="#1a6fd2"/><stop offset="0.600" stop-color="#2bb5c9"/><stop offset="1" stop-color="#5fd04a"/></linearGradient></defs><circle cx="19.500" cy="19.500" r="19" fill="#1469c9"/><path d="M1 17C3 5 13 0 21 1c10 1 17 8 17 17 0 6-5 9-10 9-4 0-6-2-5-4 2-3 1-8-4-9C12 13 4 14 1 17z" fill="url(#eg)"/><path d="M13 22c-1 8 6 15 15 14 4-1 7-3 9-6-5 3-13 2-16-3-2-3-1-7 1-8-4-1-8 0-9 3z" fill="#0c4a9e"/><circle cx="17" cy="21" r="5" fill="#1d1d1d" opacity="0.0"/></svg>
<div style="position:absolute;left:872px;top:1672.5px;width:9px;height:3px;background:#8a8a8a;border-radius:2px;"></div>
<svg style="position:absolute;left:926px;top:1627.5px" width="39" height="39" viewBox="0 0 39 39"><circle cx="19.500" cy="19.500" r="19" fill="#dd4b3e"/><path d="M19.500 19.500L3 10A19 19 0 0 0 15 38z" fill="#1e9d59"/><path d="M19.500 19.500L15 38A19 19 0 0 0 36 10z" fill="#fbc116" transform="rotate(0)"/><path d="M19.500 19.500L36 10H19.500z" fill="#dd4b3e"/><circle cx="19.500" cy="19.500" r="9" fill="#fff"/><circle cx="19.500" cy="19.500" r="7" fill="#3f87f1"/></svg>
<svg style="position:absolute;left:996px;top:1628px" width="36" height="37" viewBox="0 0 36 37"><path d="M30 2l-4 8h-14l-6 9 5 8h12l2-4h-8l3-6h14l-6 15H8L1 19 10 6h14z" fill="#d4261a"/></svg>
<svg style="position:absolute;left:1063.5px;top:1628px" width="38" height="38" viewBox="0 0 38 38"><rect width="38" height="38" fill="#f4e9e6"/><path d="M6 32L16 5h7l10 27h-6.500l-2-6h-10l-2 6zM16.500 21h6.500l-3.300-10z" fill="#c0202c" fill-rule="evenodd"/><path d="M6 32l3-8 4 2-2 6z" fill="#8d1620"/></svg>
<div style="position:absolute;left:1120px;top:1615.5px;width:62px;height:62px;background:#2d2d2d;border-radius:6px;"></div>
<svg style="position:absolute;left:1132.5px;top:1628px" width="38" height="38" viewBox="0 0 633 633"><rect width="633" height="633" rx="125" fill="#3aa63d"/><path fill="#fff" fill-rule="evenodd" d="M100 203L305 83L305 558L250 528L250 343L135 348L135 458L100 433zM135 228L250 183L250 283L135 293zM325 83L530 203L530 238L390 183L390 288L530 283L530 438L325 558L325 488L495 408L495 348L325 353z"/></svg>
<div style="position:absolute;left:1138.5px;top:1672px;width:25px;height:3.5px;background:#f2795a;border-radius:2px;"></div>
<svg style="position:absolute;left:1201px;top:1628px" width="38" height="38" viewBox="0 0 633 633"><rect width="633" height="633" rx="125" fill="#3f86e6"/><path fill="#fff" fill-rule="evenodd" d="M103 203 L308 83 L308 558 L253 528 L253 388 Q248 343 208 343 L138 343 L138 458 L103 433 zM138 228 L238 188 Q253 188 253 208 L253 258 Q253 283 228 285 L138 293 zM328 83 L533 203 L533 438 L328 558 zM383 183 L488 223 Q498 228 498 243 L498 296 L383 288 zM383 353 L498 348 L498 393 Q498 408 483 416 L383 458 z"/></svg>
<svg style="position:absolute;left:1269px;top:1628px" width="38" height="38" viewBox="0 0 38 38"><defs><radialGradient id="bg1" cx="0.500" cy="0.350" r="0.700"><stop offset="0" stop-color="#ffffff"/><stop offset="1" stop-color="#b5b5b5"/></radialGradient></defs><circle cx="19" cy="19" r="18.500" fill="url(#bg1)"/><path d="M4 24l11-9h9l-5 5h6l-3 4z" fill="#4d5459"/><path d="M20 18l7-5 9 4-8 6z" fill="#14506e"/><path d="M25 17l3-1.500 3 1.500-3 1.500z" fill="#e8f4fa"/></svg>
<svg style="position:absolute;left:1338px;top:1628px" width="38" height="38" viewBox="0 0 38 38"><defs><linearGradient id="wp" x1="0" y1="0" x2="0" y2="1"><stop offset="0" stop-color="#f0331c"/><stop offset="1" stop-color="#ff6a1a"/></linearGradient></defs><circle cx="19" cy="19" r="18.500" fill="url(#wp)"/><path d="M8.500 12.500l3.500 13.500 5-11.500 3 11.500 8.500-13.500" fill="none" stroke="#fff" stroke-width="3.600" stroke-linejoin="miter"/></svg>
<div style="position:absolute;left:0px;top:1688px;width:2017px;height:562px;background:#f4f4f4;"></div>
<div style="position:absolute;left:655px;top:1778px;width:2px;height:418px;background:#c2c2c2;"></div>
<div style="position:absolute;left:1430px;top:1781px;width:2px;height:417px;background:#c2c2c2;"></div>
<svg style="position:absolute;left:60px;top:1875px" width="200" height="140" viewBox="0 0 200 140"><g transform="scale(0.10989)">
<g fill="none" stroke="#163c8e" stroke-width="27">
<ellipse cx="893" cy="638" rx="800" ry="540" stroke-width="30"/>
<path d="M890 100V385M890 820V1175"/>
<path d="M770 105Q680 245 640 380M1010 105Q1100 245 1140 380"/>
<path d="M600 150Q450 265 370 410M1180 150Q1330 265 1410 410"/>
<path d="M560 165Q890 305 1225 165M300 290Q890 490 1480 290"/>
<path d="M300 980Q890 760 1480 980M590 1090Q890 970 1195 1090"/>
<path d="M605 820Q655 1030 775 1170M1175 820Q1125 1030 1005 1170"/>
<path d="M355 820Q440 1010 610 1130M1425 820Q1340 1010 1170 1130"/>
<path d="M95 605H135M1615 605H1680"/>
</g>
<g fill="#cc0008">
<path d="M165 760Q160 700 250 590Q330 490 420 452L565 440L548 528L492 535L440 745L1508 740L1495 790L210 792Q165 790 165 760z"/>
<path d="M620 440H830Q875 445 865 490L852 555Q840 590 790 592L835 700H745L712 602H662L637 700H545zM700 505L688 548H760Q775 548 778 535L783 518Q785 505 770 505z" fill-rule="evenodd"/>
<path d="M960 440H1250L1232 520H1035L1010 620H1205L1185 700H900z"/>
<path d="M1290 440H1590L1570 520H1365L1340 620H1535L1515 700H1225z"/>
</g>
</g></svg>
<div style="position:absolute;left:56px;top:2007.5px;font-size:49.5px;line-height:64px;letter-spacing:6.300px;color:#050505;font-weight:900;white-space:nowrap;font-family:'Liberation Sans','Noto Sans CJK SC',sans-serif">中国铁建</div>
<div style="position:absolute;left:59.0px;top:2088.8px;font-size:28px;line-height:28px;color:#333;font-weight:700;white-space:nowrap;letter-spacing:0.985px;">Trusted Partner in Rail, Energy, and</div>
<div style="position:absolute;left:59.0px;top:2123.3px;font-size:28px;line-height:28px;color:#333;font-weight:700;white-space:nowrap;letter-spacing:1.562px;">Urban Infrastructure</div>
<div style="position:absolute;left:724.5px;top:1782.6px;font-size:24.5px;line-height:24.5px;color:#1a80d8;font-weight:700;white-space:nowrap;transform:scaleX(0.9357);transform-origin:0 0;">CUSTOMER SNAPSHOT</div>
<div style="position:absolute;left:724.0px;top:1823.9px;font-size:24.5px;line-height:24.5px;color:#333;font-weight:700;white-space:nowrap;letter-spacing:0.577px;">Industry:</div>
<div style="position:absolute;left:864.0px;top:1823.9px;font-size:24.5px;line-height:24.5px;color:#3a3a3a;font-weight:400;white-space:nowrap;letter-spacing:0.661px;">Construction &amp; Infrastructure</div>
<div style="position:absolute;left:724.0px;top:1868.7px;font-size:24.5px;line-height:24.5px;color:#333;font-weight:700;white-space:nowrap;letter-spacing:-0.072px;">Founded:</div>
<div style="position:absolute;left:864.0px;top:1868.7px;font-size:24.5px;line-height:24.5px;color:#3a3a3a;font-weight:400;white-space:nowrap;letter-spacing:-0.125px;">1948</div>
<div style="position:absolute;left:724.0px;top:1914.5px;font-size:24.5px;line-height:24.5px;color:#333;font-weight:700;white-space:nowrap;transform:scaleX(0.9339);transform-origin:0 0;">Focus:</div>
<div style="position:absolute;left:864.0px;top:1914.5px;font-size:24.5px;line-height:24.5px;color:#3a3a3a;font-weight:400;white-space:nowrap;letter-spacing:0.385px;">Railways, Infrastructure, Energy, and Urban</div>
<div style="position:absolute;left:864.0px;top:1948.1px;font-size:24.5px;line-height:24.5px;color:#3a3a3a;font-weight:400;white-space:nowrap;letter-spacing:0.604px;">Development</div>
<div style="position:absolute;left:724.0px;top:1993.6px;font-size:24.5px;line-height:24.5px;color:#333;font-weight:700;white-space:nowrap;transform:scaleX(0.9797);transform-origin:0 0;">HQ:</div>
<div style="position:absolute;left:864.0px;top:1993.6px;font-size:24.5px;line-height:24.5px;color:#3a3a3a;font-weight:400;white-space:nowrap;letter-spacing:0.131px;">Beijing, China</div>
<div style="position:absolute;left:724.0px;top:2050.3px;font-size:24.5px;line-height:24.5px;color:#1a80d8;font-weight:700;white-space:nowrap;transform:scaleX(0.9219);transform-origin:0 0;">PRODUCT USED</div>
<svg style="position:absolute;left:724px;top:2097px" width="70.5" height="70.5" viewBox="0 0 633 633"><rect width="633" height="633" rx="120" fill="#52ac41"/><path fill="#fff" fill-rule="evenodd" d="M100 203L305 83L305 558L250 528L250 343L135 348L135 458L100 433zM135 228L250 183L250 283L135 293zM325 83L530 203L530 238L390 183L390 288L530 283L530 438L325 558L325 488L495 408L495 348L325 353z"/></svg>
<svg style="position:absolute;left:832.5px;top:2097px" width="70.5" height="70.5" viewBox="0 0 633 633"><rect width="633" height="633" rx="120" fill="#4889e6"/><path fill="#fff" fill-rule="evenodd" d="M103 203 L308 83 L308 558 L253 528 L253 388 Q248 343 208 343 L138 343 L138 458 L103 433 zM138 228 L238 188 Q253 188 253 208 L253 258 Q253 283 228 285 L138 293 zM328 83 L533 203 L533 438 L328 558 zM383 183 L488 223 Q498 228 498 243 L498 296 L383 288 zM383 353 L498 348 L498 393 Q498 408 483 416 L383 458 z"/></svg>
<div style="position:absolute;left:1496.3px;top:1782.5px;font-size:24.5px;line-height:24.5px;color:#1a80d8;font-weight:700;white-space:nowrap;transform:scaleX(0.8799);transform-origin:0 0;">RESULTS</div>
<div style="position:absolute;left:1547.5px;top:1844.0px;font-size:23px;line-height:23px;color:#3a3a3a;font-weight:400;white-space:nowrap;letter-spacing:0.812px;">Faster tendering compared to manual</div>
<div style="position:absolute;left:1547.5px;top:1875.8px;font-size:23px;line-height:23px;color:#3a3a3a;font-weight:400;white-space:nowrap;letter-spacing:1.380px;">method</div>
<div style="position:absolute;left:1547.5px;top:1946.7px;font-size:23px;line-height:23px;color:#3a3a3a;font-weight:400;white-space:nowrap;letter-spacing:0.783px;">Accurate rebar &amp; quantites takeoff</div>
<div style="position:absolute;left:1547.5px;top:2017.3px;font-size:23px;line-height:23px;color:#3a3a3a;font-weight:400;white-space:nowrap;letter-spacing:0.265px;">Easy 3D checks for all teams</div>
<div style="position:absolute;left:1547.5px;top:2087.3px;font-size:23px;line-height:23px;color:#3a3a3a;font-weight:400;white-space:nowrap;letter-spacing:0.624px;">Fewe errors, more confidence</div>
<svg style="position:absolute;left:1498px;top:1842px" width="34" height="32" viewBox="0 0 34 32"><g stroke="#2a86e8" stroke-width="2.200" fill="none"><rect x="2" y="2.500" width="28" height="20" rx="1.500"/><path d="M6 27.500h13"/><path d="M7 18v-4M12 18v-7M17 18v-5"/><path d="M8 10l6-3 4 3 7-5M21 5h4v4"/><circle cx="25" cy="23" r="6.500" fill="#f4f4f4"/><path d="M25 19.500v4h3.500"/></g></svg>
<svg style="position:absolute;left:1499px;top:1940px" width="36" height="36" viewBox="0 0 36 36"><g stroke="#2a86e8" stroke-width="2.700" fill="none" stroke-linejoin="round"><path d="M17.1 2.8L21.7 7.4L28.1 7.4L28.1 13.8L32.7 18.4L28.1 23.0L28.1 29.4L21.7 29.4L17.1 34.0L12.5 29.4L6.1 29.4L6.1 23.0L1.5 18.4L6.1 13.8L6.1 7.4L12.5 7.4z"/><path d="M9.700 18.200l5.400 5.800 9.400-11.800" stroke-linecap="round"/></g></svg>
<svg style="position:absolute;left:1497px;top:2011px" width="34" height="36" viewBox="0 0 34 36"><g stroke="#2a86e8" stroke-width="2.200" fill="none" stroke-linejoin="round"><path d="M4.300 8.700L16.200 3.200 28.500 8.700 16.200 14.600z"/><path d="M2.900 14.100L14.200 19.500V32.300L2.900 26.900z"/><path d="M18.100 19.500L29.500 14.100V26.900L18.100 32.300z"/></g></svg>
<svg style="position:absolute;left:1499px;top:2085.5px" width="30" height="30" viewBox="0 0 30 30"><g stroke="#2a86e8" stroke-width="2.300" fill="none" stroke-linecap="round"><circle cx="14.600" cy="14.500" r="12.600"/><path d="M9.800 10l9.800 9M19.600 10l-9.800 9"/></g></svg>
</body></html>
